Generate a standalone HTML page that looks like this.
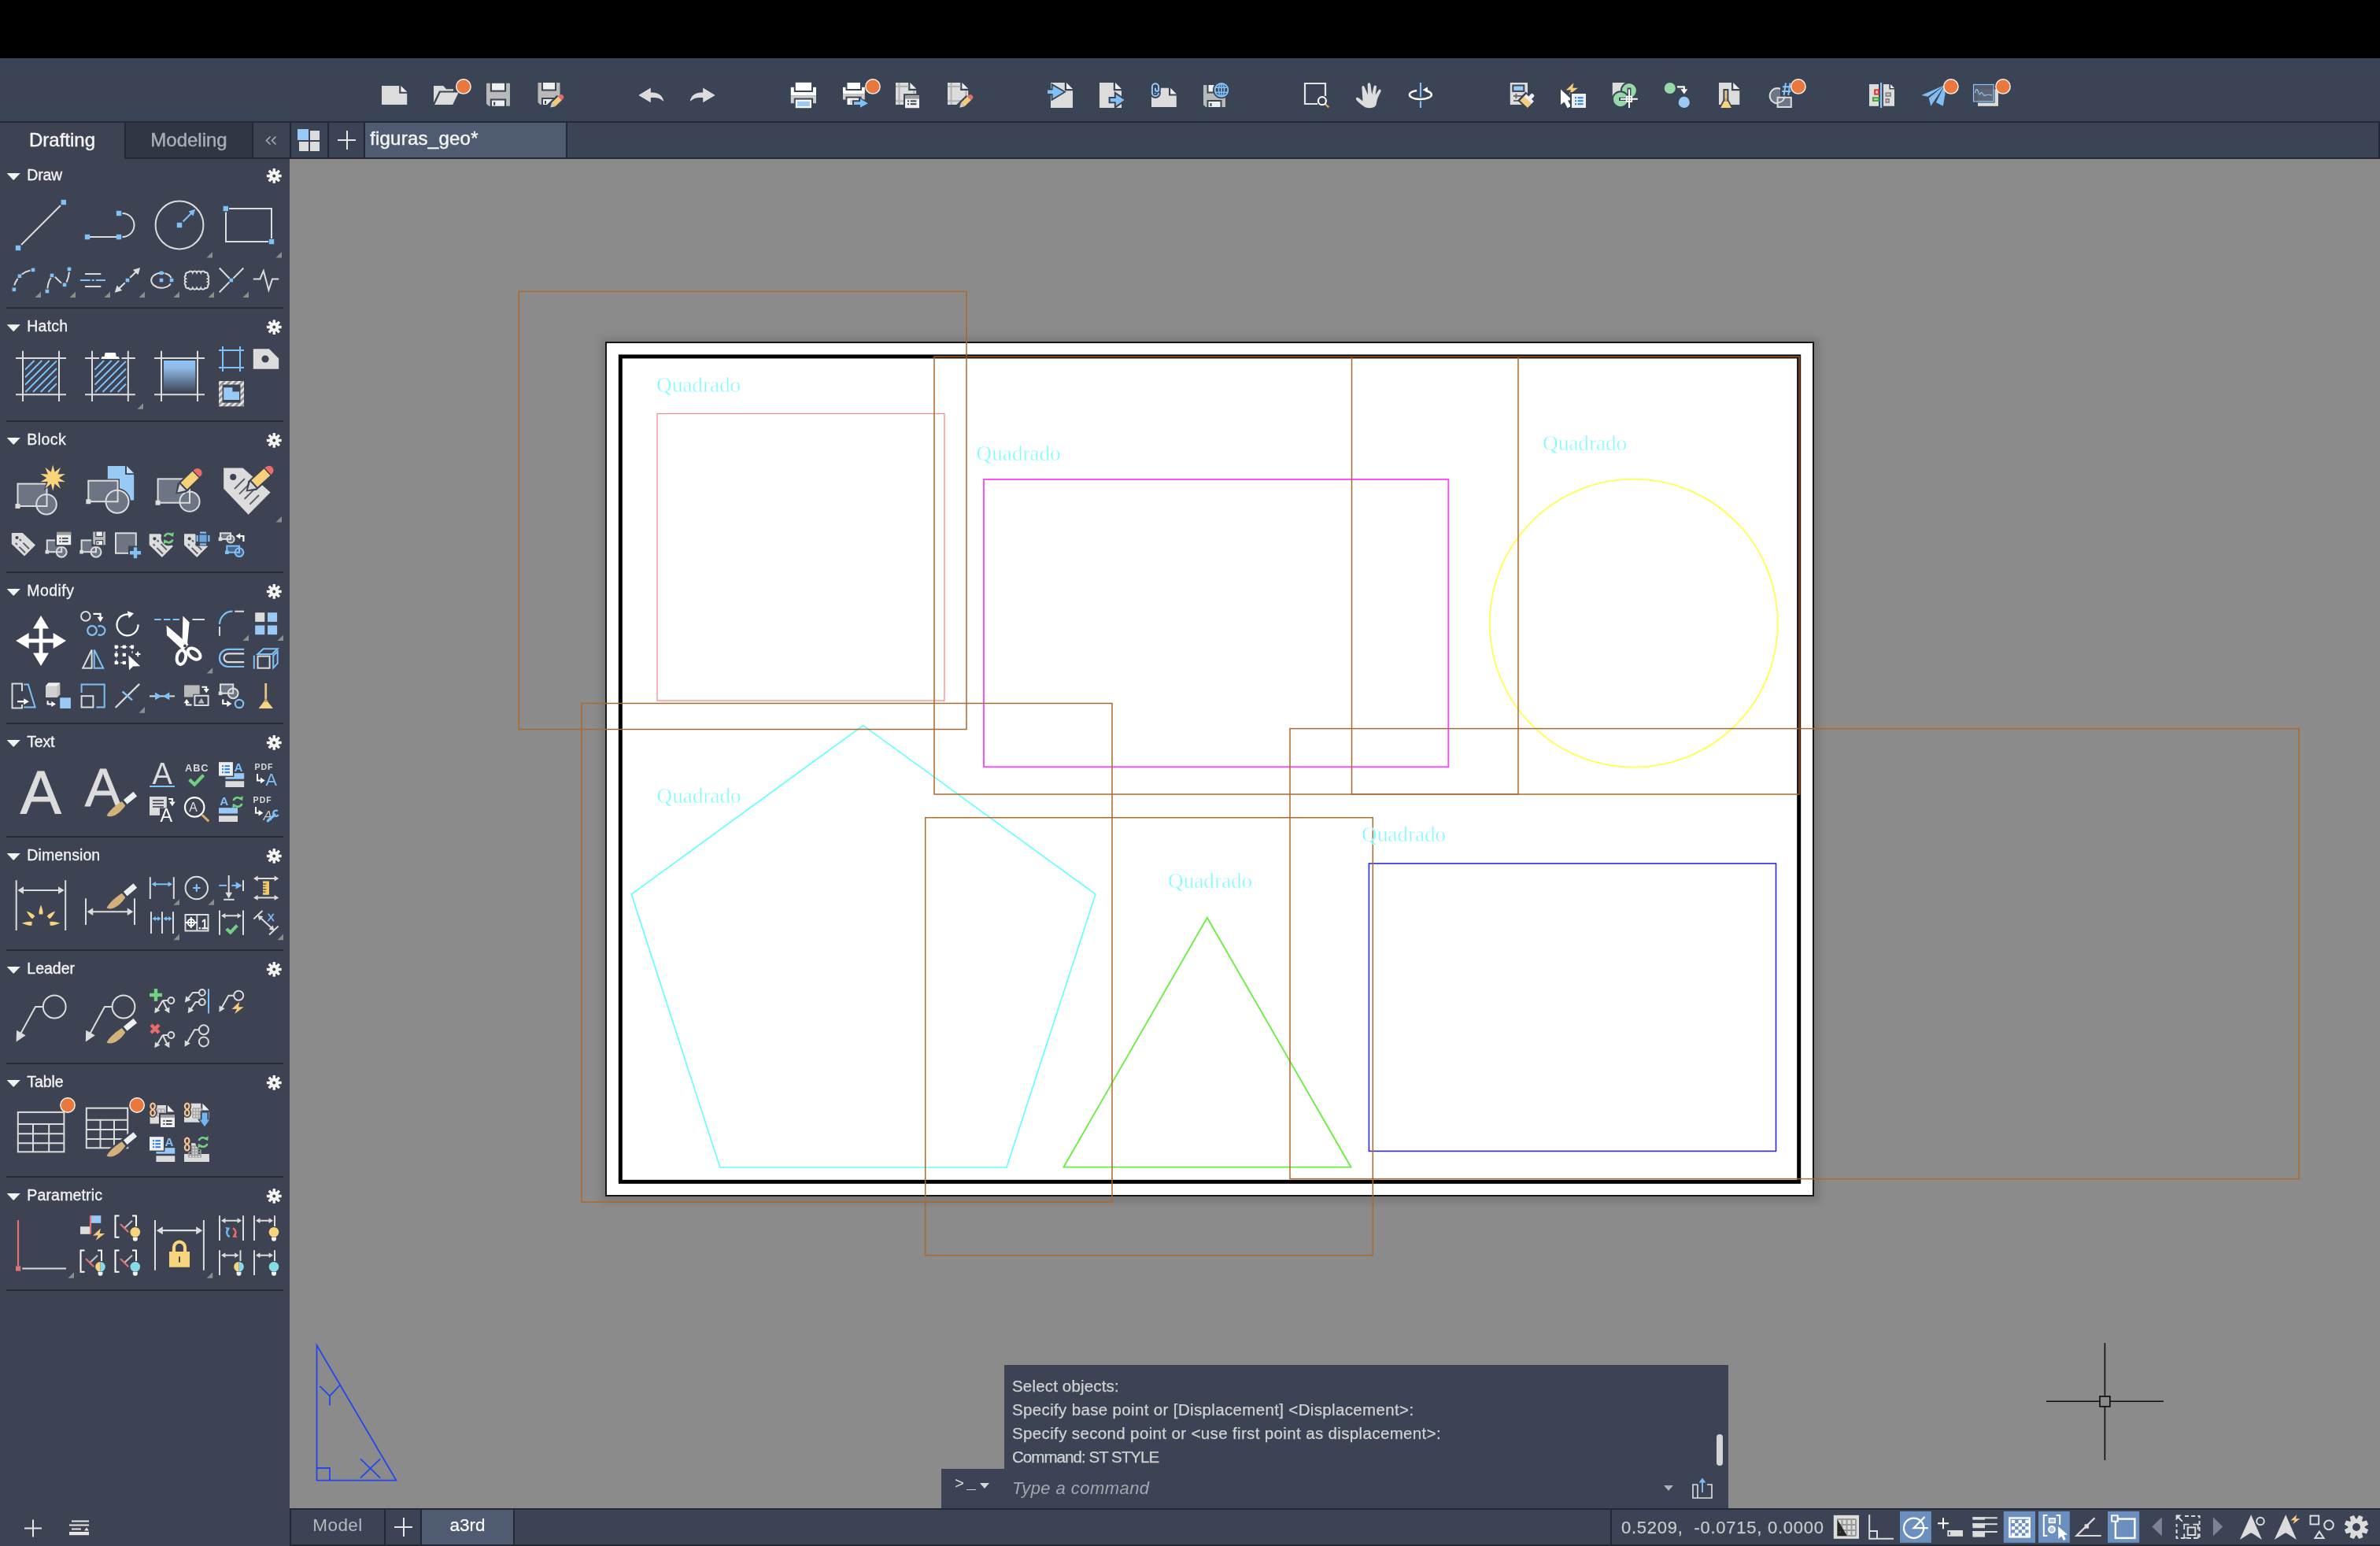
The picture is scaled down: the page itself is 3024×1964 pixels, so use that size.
<!DOCTYPE html>
<html><head><meta charset="utf-8"><title>AutoCAD</title>
<style>
*{box-sizing:border-box;margin:0;padding:0}
html,body{width:3024px;height:1964px;overflow:hidden;background:#8b8b8b;font-family:"Liberation Sans",sans-serif;}
.abs{position:absolute}
svg,.ptab,.cmdt,.txt{will-change:transform}
#top{position:absolute;left:0;top:0;width:3024px;height:74px;background:#000}
#toolbar{position:absolute;left:0;top:74px;width:3024px;height:80px;background:#3b4455}
#tbline{position:absolute;left:0;top:154px;width:3024px;height:2px;background:#232a36}
#tabrow{position:absolute;left:368px;top:156px;width:2656px;height:44px;background:#3b4455}
#tabline{position:absolute;left:368px;top:200px;width:2656px;height:2px;background:#232a36}
#panel{position:absolute;left:0;top:156px;width:368px;height:1808px;background:#3d4352}
#canvas{position:absolute;left:368px;top:202px;width:2656px;height:1714px;background:#8b8b8b;overflow:hidden}
#status{position:absolute;left:368px;top:1916px;width:2656px;height:48px;background:#3b4354;border-top:2px solid #232a36;border-bottom:2px solid #232a36}
.vsep{position:absolute;width:2px;background:#232a36}
.ptab{position:absolute;top:156px;height:44px;font-size:24px;line-height:44px;text-align:center}
.hdr{position:absolute;left:34px;font-size:19px;color:#f2f2f2;line-height:24px;height:24px;text-shadow:0 0 0.6px #f2f2f2}
.tri{position:absolute;left:9px;width:0;height:0;border-left:8px solid transparent;border-right:8px solid transparent;border-top:9px solid #f2f2f2}
.sep{position:absolute;left:9px;width:351px;height:2px;background:#252b37}
.ic{position:absolute;overflow:visible}
.cmdt{position:absolute;left:1286px;font-size:20.5px;color:#d2d2d2;-webkit-text-stroke:0.25px #d2d2d2;line-height:30px;height:30px;white-space:pre}
</style></head><body>
<div id="top"></div>
<div id="toolbar"></div>
<div id="tbline"></div>
<div id="panel"></div>
<div id="tabrow"></div>
<div id="tabline"></div>
<!-- panel tabs -->
<div class="ptab" style="left:0;width:158px;background:#3d4352;color:#f4f4f4;height:46px;-webkit-text-stroke:0.45px #f4f4f4">Drafting</div>
<div class="ptab" style="left:160px;width:160px;background:#303644;color:#a9adb6;-webkit-text-stroke:0.45px #a9adb6">Modeling</div>
<div class="ptab" style="left:322px;width:46px;background:#3d4352"></div>
<div class="vsep" style="left:158px;top:156px;height:46px"></div>
<div class="vsep" style="left:320px;top:156px;height:46px"></div>
<div class="abs" style="left:158px;top:200px;width:210px;height:2px;background:#232a36"></div>
<div class="vsep" style="left:368px;top:156px;height:44px"></div>
<div class="vsep" style="left:416px;top:156px;height:44px"></div>
<div class="vsep" style="left:462px;top:156px;height:44px"></div>
<div class="abs" style="left:464px;top:156px;width:255px;height:44px;background:#4f5b71"></div>
<div class="vsep" style="left:719px;top:156px;height:44px"></div>
<div class="abs txt" style="left:470px;top:156px;height:44px;line-height:40px;font-size:24px;color:#f4f4f4;-webkit-text-stroke:0.45px #f4f4f4;letter-spacing:0.25px">figuras_geo*</div>
<div class="vsep" style="left:3022px;top:156px;height:44px"></div>
<!-- grid icon -->
<div class="abs" style="left:378px;top:164px;width:14px;height:14px;background:#99c9f5"></div>
<div class="abs" style="left:394px;top:166px;width:12px;height:12px;background:#dcdcdc"></div>
<div class="abs" style="left:380px;top:180px;width:12px;height:12px;background:#dcdcdc"></div>
<div class="abs" style="left:394px;top:180px;width:12px;height:12px;background:#dcdcdc"></div>
<!-- plus -->
<div class="abs" style="left:429px;top:177px;width:23px;height:2px;background:#e6e6e6"></div>
<div class="abs" style="left:439.5px;top:166px;width:2px;height:24px;background:#e6e6e6"></div>
<!-- << -->
<svg class="ic" style="left:324px;top:156px" width="44" height="44" viewBox="0 0 44 44"><path d="M19.5 17.5 L14.5 22.5 L19.5 27.5 M26.5 17.5 L21.5 22.5 L26.5 27.5" fill="none" stroke="#a9adb6" stroke-width="1.6"/></svg>
<div id="canvas">
<svg class="abs" style="left:0;top:0" width="2656" height="1714" viewBox="368 202 2656 1714">
<defs>
<filter id="psh" x="-5%" y="-5%" width="110%" height="110%"><feGaussianBlur stdDeviation="4.5"/></filter>
</defs>
<!-- paper shadow -->
<rect x="764" y="430" width="1548" height="1097" fill="#444" opacity="0.24" filter="url(#psh)"/>
<rect x="770" y="435" width="1534" height="1084" fill="#ffffff" stroke="#161616" stroke-width="2"/>
<!-- thick black border -->
<rect x="788.3" y="452.9" width="1497.4" height="1048.4" fill="none" stroke="#000" stroke-width="5"/>
<!-- shapes -->
<rect x="835" y="525.5" width="365" height="364.5" fill="none" stroke="#f28c8c" stroke-width="1.25"/>
<rect x="1250" y="609" width="590.3" height="365.3" fill="none" stroke="#ff40ff" stroke-width="1.8"/>
<circle cx="2075.8" cy="791.7" r="183" fill="none" stroke="#ffff50" stroke-width="1.8"/>
<polygon points="1096.7,921.6 1392,1136 1279,1483 914.8,1483 802.3,1136" fill="none" stroke="#66ffff" stroke-width="1.7"/>
<polygon points="1533.8,1165.8 1716.6,1482.7 1351.4,1482.7" fill="none" stroke="#66f03c" stroke-width="1.8"/>
<rect x="1739.4" y="1097" width="517.1" height="365.4" fill="none" stroke="#2a2ae6" stroke-width="1.6"/>
<!-- viewports (brown) -->
<g fill="none" stroke="#a96a2e" stroke-width="1.5">
<rect x="659.3" y="370.3" width="568.7" height="556.2"/>
<rect x="1187" y="453.1" width="1099.2" height="555.9"/>
<rect x="1717.5" y="453.1" width="211.5" height="555.9"/>
<rect x="739" y="893.5" width="674" height="633.5"/>
<rect x="1175.7" y="1038.7" width="568.6" height="556"/>
<rect x="1639" y="925.6" width="1282" height="572"/>
</g>
<path d="M1187 453.1 H2286.2 V1009" fill="none" stroke="#7c4416" stroke-width="2.4"/>
<!-- labels -->
<g font-family="Liberation Serif, serif" font-size="27.2" fill="#6ffcff" opacity="0.9" stroke="#ffffff" stroke-width="0.55">
<text x="834" y="498.3">Quadrado</text>
<text x="1240.5" y="584.9">Quadrado</text>
<text x="1960" y="572.4">Quadrado</text>
<text x="834.5" y="1019.8">Quadrado</text>
<text x="1484" y="1128">Quadrado</text>
<text x="1730" y="1068.8">Quadrado</text>
</g>
<!-- UCS icon -->
<g fill="none" stroke="#2447e8" stroke-width="1.8">
<polygon points="402.5,1709 503.4,1880.6 402.5,1880.6"/>
<path d="M402.5 1865 H419 V1880.6"/>
<path d="M406.3 1760.8 L419 1773.4 L431.5 1760 M419 1773.4 V1785.5"/>
<path d="M458 1853.3 L483.2 1877.6 M483.2 1853.3 L458 1877.6"/>
</g>
<!-- crosshair -->
<g fill="none" stroke="#101010" stroke-width="1.6">
<path d="M2600 1780.3 H2668 M2681 1780.3 H2749 M2674.4 1706 V1774 M2674.4 1787 V1855"/>
<rect x="2668" y="1773.9" width="12.9" height="12.9" stroke-width="1.7"/>
</g>
</svg>
<!-- command window -->
<div class="abs" style="left:908px;top:1532px;width:920px;height:134px;background:#3b4354"></div>
<div class="abs" style="left:828px;top:1664px;width:1000px;height:50px;background:#3b4354"></div>
<div class="abs" style="left:1813px;top:1620px;width:8px;height:40px;border-radius:4px;background:#d4d4d4"></div>
</div><!-- /canvas -->
<div class="cmdt" style="top:1746px;letter-spacing:0.17px">Select objects:</div>
<div class="cmdt" style="top:1776px;letter-spacing:0.35px">Specify base point or [Displacement] &lt;Displacement&gt;:</div>
<div class="cmdt" style="top:1806px;letter-spacing:0.36px">Specify second point or &lt;use first point as displacement&gt;:</div>
<div class="cmdt" style="top:1836px;letter-spacing:-0.95px">Command: ST STYLE</div>
<div class="abs txt" style="left:1286px;top:1876px;font-size:22px;line-height:30px;font-style:italic;color:#a3a8b1;letter-spacing:0.44px">Type a command</div>
<div class="abs txt" style="left:1213px;top:1872px;font-size:20px;line-height:28px;color:#d8d8d8;font-family:'Liberation Mono',monospace;letter-spacing:3px">&gt;_</div>
<div class="abs" style="left:1245px;top:1884px;width:0;height:0;border-left:6px solid transparent;border-right:6px solid transparent;border-top:7px solid #d8d8d8"></div>
<div class="abs" style="left:2114px;top:1887px;width:0;height:0;border-left:6px solid transparent;border-right:6px solid transparent;border-top:7px solid #aeb2ba"></div>
<svg class="ic" style="left:2148px;top:1874px" width="30" height="36" viewBox="0 0 30 36"><path d="M9 12 H3 V29 H27 V12 H21 M9 12 V29" fill="none" stroke="#e0e0e0" stroke-width="1.6"/><path d="M15 22 V6" stroke="#7fb8ee" stroke-width="2" fill="none"/><path d="M10.5 9.5 L15 3.5 L19.5 9.5 Z" fill="#7fb8ee"/></svg>
<div id="status"></div>
<!-- layout tabs -->
<div class="vsep" style="left:368px;top:1918px;height:44px"></div>
<div class="abs txt" style="left:370px;top:1918px;width:118px;height:44px;line-height:40px;text-align:center;font-size:22.5px;color:#b4b8c0;background:#3b4354;letter-spacing:0.4px">Model</div>
<div class="vsep" style="left:488px;top:1918px;height:44px"></div>
<div class="abs" style="left:501px;top:1939px;width:23px;height:2px;background:#e6e6e6"></div>
<div class="abs" style="left:511.5px;top:1928px;width:2px;height:24px;background:#e6e6e6"></div>
<div class="vsep" style="left:534px;top:1918px;height:44px"></div>
<div class="abs txt" style="left:536px;top:1918px;width:116px;height:44px;line-height:40px;text-align:center;font-size:22.5px;color:#f6f6f6;background:#4f5b71;text-shadow:0 0 0.8px #f6f6f6">a3rd</div>
<div class="vsep" style="left:652px;top:1918px;height:44px"></div>
<div class="vsep" style="left:2046px;top:1918px;height:44px"></div>
<div class="abs txt" style="left:2060px;top:1918px;height:44px;line-height:46px;font-size:22px;color:#c8c8c8;-webkit-text-stroke:0.25px #c8c8c8;white-space:pre;letter-spacing:0.75px">0.5209,  -0.0715, 0.0000</div>
<svg class="abs" style="left:2300px;top:1916px" width="724" height="48" viewBox="2300 1916 724 48">
<rect x="2329.8" y="1924.9" width="32.2" height="29.9" fill="#dcdcdc" />
<path d="M2340.5 1929.9 V1951 M2346.5 1929.9 V1951 M2352.5 1929.9 V1951 M2358 1929.9 V1951 M2334.4 1929.9 H2358 M2334.4 1936.9 H2358 M2334.4 1943.9 H2358 M2334.4 1951 H2358 " stroke="#9a9a9a" stroke-width="2" fill="none" />
<path d="M2334.4 1929.9 L2346.8 1951 H2334.4 Z" fill="#262626" />
<rect x="2337.6" y="1945.6" width="1.2" height="1.2" fill="#888" />
<path d="M2375.2 1924.3 V1954.8 H2406 M2375.2 1945 H2385 V1954.8" stroke="#dcdcdc" stroke-width="2" fill="none" />
<rect x="2414" y="1920" width="39.9" height="39.8" fill="#6b90c0" />
<circle cx="2431.6" cy="1941.2" r="12.6" fill="none" stroke="#ffffff" stroke-width="2.2"/>
<path d="M2449.8 1941.2 H2431.6 L2445.5 1926.9" stroke="#ffffff" stroke-width="2.2" fill="none" stroke-linejoin="miter"/>
<path d="M2462 1935.2 H2476 M2469 1928.2 V1942.2" stroke="#ffffff" stroke-width="2" fill="none" />
<rect x="2474.3" y="1944" width="19.7" height="7.8" fill="#dcdcdc" />
<rect x="2476.4" y="1946" width="1.6" height="4" fill="#3d4352" />
<rect x="2506.4" y="1927.3" width="31.4" height="2" fill="#dcdcdc" />
<rect x="2506.4" y="1927.3" width="15.6" height="3.4" fill="#dcdcdc" />
<rect x="2506.4" y="1935.2" width="31.4" height="2" fill="#dcdcdc" />
<rect x="2506.4" y="1935.2" width="15.6" height="6" fill="#dcdcdc" />
<rect x="2506.4" y="1945" width="31.4" height="2" fill="#dcdcdc" />
<rect x="2506.4" y="1945" width="15.6" height="7.6" fill="#dcdcdc" />
<rect x="2545.8" y="1920" width="40.2" height="39.8" fill="#6b90c0" />
<rect x="2553.4" y="1928.5" width="25.3" height="23.9" fill="none" stroke="#ffffff" stroke-width="2.4" />
<rect x="2555.8" y="1930.9" width="4.38" height="4.14" fill="#ffffff" />
<rect x="2555.8" y="1939.18" width="4.38" height="4.14" fill="#ffffff" />
<rect x="2555.8" y="1947.46" width="4.38" height="4.14" fill="#ffffff" />
<rect x="2560.18" y="1935.04" width="4.38" height="4.14" fill="#ffffff" />
<rect x="2560.18" y="1943.32" width="4.38" height="4.14" fill="#ffffff" />
<rect x="2564.56" y="1930.9" width="4.38" height="4.14" fill="#ffffff" />
<rect x="2564.56" y="1939.18" width="4.38" height="4.14" fill="#ffffff" />
<rect x="2564.56" y="1947.46" width="4.38" height="4.14" fill="#ffffff" />
<rect x="2568.94" y="1935.04" width="4.38" height="4.14" fill="#ffffff" />
<rect x="2568.94" y="1943.32" width="4.38" height="4.14" fill="#ffffff" />
<rect x="2573.32" y="1930.9" width="4.38" height="4.14" fill="#ffffff" />
<rect x="2573.32" y="1939.18" width="4.38" height="4.14" fill="#ffffff" />
<rect x="2573.32" y="1947.46" width="4.38" height="4.14" fill="#ffffff" />
<rect x="2590" y="1920" width="39.8" height="39.8" fill="#6b90c0" />
<path d="M2601.4 1924.9 H2596.8 V1951 H2601.4 M2612.6 1924.9 H2617.2 V1937" stroke="#ffffff" stroke-width="2" fill="none" />
<rect x="2603.6" y="1929" width="7.6" height="5.4" fill="#a8bcdc" stroke="#ffffff" stroke-width="1.6" />
<circle cx="2607" cy="1943" r="4" fill="#b8c8e2" stroke="#ffffff" stroke-width="1.8"/>
<path d="M2615 1939 L2615.4 1955 L2619.4 1951.4 L2622 1957 L2624.8 1955.6 L2622.2 1950.2 L2627 1949.6 Z" fill="#ffffff" />
<path d="M2669.7 1951 H2638.4 L2661.5 1928.4" stroke="#dcdcdc" stroke-width="2.2" fill="none" stroke-linejoin="miter"/>
<rect x="2648.6" y="1936.3" width="5.4" height="5.4" fill="#dcdcdc"/>
<rect x="2678" y="1920" width="40.2" height="39.8" fill="#6b90c0" />
<rect x="2687.9" y="1929.6" width="24.5" height="24.3" fill="none" stroke="#ffffff" stroke-width="2.4" />
<rect x="2683.2" y="1925.3" width="7.5" height="7.4" fill="#6b90c0" stroke="#ffffff" stroke-width="2" />
<path d="M2734.3 1939.4 L2746.9 1927.3 V1951.5 Z" fill="#7c8494" />
<path d="M2824.3 1939.4 L2811.9 1927.3 V1951.5 Z" fill="#7c8494" />
<path d="M2776 1925.9 H2794.6 V1954.1 H2765.6 V1936" stroke="#dcdcdc" stroke-width="2" fill="none" stroke-dasharray="5 3.2"/>
<rect x="2779.7" y="1940.4" width="9.6" height="9.6" fill="none" stroke="#dcdcdc" stroke-width="2" />
<path d="M2775.2 1943 V1936.6 H2781.6 M2786.4 1936.6 H2792.8 V1943 M2775.2 1948.4 V1953.6 H2781 M2787 1953.6 H2792.8 V1948.4" stroke="#dcdcdc" stroke-width="1.8" fill="none" />
<path d="M2772.9 1932.9 L2767.4 1927.3" stroke="#dcdcdc" stroke-width="2" fill="none" stroke-linecap="butt"/>
<path d="M2764.6 1924.6 H2771.6 L2764.6 1931.6 Z" fill="#dcdcdc" />
<path d="M2860.2 1924.3 L2874 1956 L2862.6 1948.4 Q2860.2 1946.4 2857.8 1948.4 L2845.8 1956 Z" fill="#dcdcdc" />
<circle cx="2872" cy="1932.5" r="4.8" fill="none" stroke="#dcdcdc" stroke-width="2"/>
<path d="M2904.2 1924.3 L2918 1956 L2906.6 1948.4 Q2904.2 1946.4 2901.8 1948.4 L2889.8 1956 Z" fill="#dcdcdc" />
<path d="M2918.12 1924.2 L2910.4 1931.45 L2915.55 1931.14 L2913.36 1936.13 L2922.33 1929.27 L2917.11 1929.27 Z" fill="#f5cc78"/>
<rect x="2935.5" y="1925.6" width="10.7" height="10.8" fill="none" stroke="#dcdcdc" stroke-width="2" />
<circle cx="2959" cy="1937.4" r="5.8" fill="none" stroke="#dcdcdc" stroke-width="2"/>
<path d="M2946.9 1945.6 L2952.6 1954.1 H2941.4 Z" stroke="#dcdcdc" stroke-width="2" fill="none" />
<g transform="translate(2994 1940)"><circle r="10.6" fill="#dcdcdc"/><path d="M-3.6 -9.1 L-2.8 -15.2 H2.8 L3.6 -9.1 Z" fill="#dcdcdc" transform="rotate(22.5)"/><path d="M-3.6 -9.1 L-2.8 -15.2 H2.8 L3.6 -9.1 Z" fill="#dcdcdc" transform="rotate(67.5)"/><path d="M-3.6 -9.1 L-2.8 -15.2 H2.8 L3.6 -9.1 Z" fill="#dcdcdc" transform="rotate(112.5)"/><path d="M-3.6 -9.1 L-2.8 -15.2 H2.8 L3.6 -9.1 Z" fill="#dcdcdc" transform="rotate(157.5)"/><path d="M-3.6 -9.1 L-2.8 -15.2 H2.8 L3.6 -9.1 Z" fill="#dcdcdc" transform="rotate(202.5)"/><path d="M-3.6 -9.1 L-2.8 -15.2 H2.8 L3.6 -9.1 Z" fill="#dcdcdc" transform="rotate(247.5)"/><path d="M-3.6 -9.1 L-2.8 -15.2 H2.8 L3.6 -9.1 Z" fill="#dcdcdc" transform="rotate(292.5)"/><path d="M-3.6 -9.1 L-2.8 -15.2 H2.8 L3.6 -9.1 Z" fill="#dcdcdc" transform="rotate(337.5)"/><circle r="5" fill="#3b4354"/></g>
</svg>
<svg class="abs" style="left:0;top:74px" width="3024" height="80" viewBox="0 74 3024 80">
<defs>
<g id="odot"><circle r="9.9" fill="#fff5ee"/><circle r="8.5" fill="#e8783e"/></g>
<g id="pencil"><!-- tip at 0,0 pointing down-left; drawn along +x then rotated -->
<path d="M0 0 L5.5 -3.3 L5.5 3.3 Z" fill="#cfcfcf"/><rect x="5.5" y="-3.3" width="11.5" height="6.6" fill="#f3cc7c"/><path d="M17 -3.3 H19 A3.3 3.3 0 0 1 19 3.3 H17 Z" fill="#ea6b6b"/></g>
<g id="floppy"><!-- 28x28 box at 0,0 -->
<path d="M0 0 H28 V28 H3 L0 25 Z" fill="#b9b9b9"/><rect x="4.5" y="-1" width="19" height="11.5" fill="#3b4455"/><rect x="6.5" y="0" width="15" height="8.5" fill="#efefef"/><rect x="4.5" y="19" width="19" height="10" fill="#3b4455"/><rect x="6.5" y="21" width="15" height="7" fill="#efefef"/><rect x="8.5" y="23" width="2" height="4" fill="#3b4455"/></g>
</defs>
<!-- New -->
<path d="M485 109 H507.2 V118.8 H517.2 V133 H485 Z" fill="#dcdcdc"/><path d="M509.4 109 L517.2 116.8 H509.4 Z" fill="#efefef"/>
<!-- Open -->
<path d="M551 109 H563.2 L567 113.3 H576 V115.4 H558 L551 130 Z" fill="#dcdcdc"/><path d="M559.6 117.5 H582.6 L575.2 133 H552.2 Z" fill="#dcdcdc"/>
<use href="#odot" x="588.9" y="109.9"/>
<!-- Save -->
<use href="#floppy" transform="translate(618 105.8) scale(1.07 1.035)"/>
<!-- Save as -->
<use href="#floppy" x="683.5" y="105"/>
<g transform="translate(699.3 136.6) rotate(-44)"><path d="M-2 -5.6 H17 V5.6 H-2Z" fill="#3b4455"/><use href="#pencil"/></g>
<!-- Undo -->
<path d="M811.3 120.9 L826.8 111.6 V117.6 C836 117 842 121 843.3 129 C839 124.5 834 123.6 826.8 124 V130.3 Z" fill="#dcdcdc"/>
<!-- Redo -->
<path d="M908.7 120.9 L893.2 111.6 V117.6 C884 117 878 121 876.7 129 C881 124.5 886 123.6 893.2 124 V130.3 Z" fill="#dcdcdc"/>
<!-- Print -->
<rect x="1004.8" y="110.8" width="32.2" height="10.4" fill="#ffffff"/><rect x="1004.8" y="121.2" width="32.2" height="10" fill="#cdcdcd"/>
<rect x="1008.8" y="103" width="24.2" height="14" fill="#3b4455"/><rect x="1010.8" y="104.8" width="20.2" height="10.2" fill="#ffffff"/>
<rect x="1008.8" y="124.6" width="24.2" height="8" fill="#3b4455"/><rect x="1010.8" y="126.6" width="20.2" height="10.6" fill="#ffffff"/><rect x="1013" y="128.8" width="15.8" height="6.2" fill="#99c9f5"/>
<!-- Batch print -->
<rect x="1071" y="110.8" width="27.8" height="8.4" fill="#ffffff"/><rect x="1071" y="119.2" width="27.8" height="7.4" fill="#cdcdcd"/>
<rect x="1074.5" y="103.4" width="20.5" height="11.6" fill="#3b4455"/><rect x="1076.5" y="105" width="16.5" height="8" fill="#ffffff"/>
<rect x="1074.5" y="122.6" width="20" height="6" fill="#3b4455"/><rect x="1076.5" y="124.6" width="15" height="8.4" fill="#ffffff"/><rect x="1080" y="126.6" width="13" height="5" fill="#cdcdcd"/>
<path d="M1083 127.3 H1091 V123 L1105.5 131.2 L1091 139.4 V135 H1083 Z" fill="#3b4455"/><path d="M1085 129.3 H1093 V125.6 L1102.8 131.2 L1093 136.8 V133 H1085 Z" fill="#7fc0f7"/>
<use href="#odot" x="1109" y="109.9"/>
<!-- Page setup -->
<path d="M1138 105 H1154.2 V115 H1164.2 V133 H1138 Z" fill="#dcdcdc"/><path d="M1156.4 105 L1164.2 112.8 H1156.4 Z" fill="#efefef"/>
<g fill="#b0b0b0"><rect x="1141.5" y="105" width="2" height="28"/><rect x="1138" y="108.8" width="16.5" height="2"/><rect x="1138" y="127.3" width="14" height="2"/><rect x="1160.4" y="115" width="2" height="8"/></g>
<rect x="1148" y="119.2" width="22" height="20" fill="#3b4455"/><rect x="1150" y="121.2" width="18" height="16" fill="#f0f0f0"/><rect x="1150" y="121.2" width="18" height="4.4" fill="#9c9c9c"/>
<g fill="#3b4455"><rect x="1153" y="127.4" width="2" height="2"/><rect x="1156.8" y="127.4" width="7.6" height="2"/><rect x="1153" y="131.2" width="2" height="2"/><rect x="1156.8" y="131.2" width="7.6" height="2"/></g>
<!-- Page edit -->
<path d="M1204 105 H1220.2 V115 H1230.2 V133 H1204 Z" fill="#dcdcdc"/><path d="M1222.4 105 L1230.2 112.8 H1222.4 Z" fill="#efefef"/>
<g fill="#b0b0b0"><rect x="1207.5" y="105" width="2" height="28"/><rect x="1204" y="108.8" width="16.5" height="2"/><rect x="1204" y="127.3" width="18" height="2"/><rect x="1226.4" y="115" width="2" height="12"/></g>
<g transform="translate(1219.3 136.8) rotate(-44)"><path d="M-2 -5.6 H17 V5.6 H-2Z" fill="#3b4455"/><use href="#pencil"/></g>
<!-- Import -->
<path d="M1335 105 H1352.8 V115.2 H1363 V137 H1335 Z" fill="#dcdcdc"/><path d="M1355 105 L1363 113 H1355 Z" fill="#efefef"/>
<path d="M1329 112.6 H1335.6 V105.6 L1354.8 116.8 L1335.6 128.4 V121 H1329 Z" fill="#3b4455"/><path d="M1331 114.6 H1337.6 V109 L1351.5 116.8 L1337.6 125 V119 H1331 Z" fill="#7fc0f7"/>
<!-- Export -->
<path d="M1397 105 H1414.8 V115.2 H1425 V137 H1397 Z" fill="#dcdcdc"/><path d="M1417 105 L1425 113 H1417 Z" fill="#efefef"/>
<path d="M1408.6 123 H1415.8 V116 L1432 127.1 L1415.8 138.4 V131.3 H1408.6 Z" fill="#3b4455"/><path d="M1410.7 125 H1417.8 V120 L1428.7 127.1 L1417.8 134.4 V129.3 H1410.7 Z" fill="#7fc0f7"/>
<!-- Attach -->
<path d="M1463 111.8 H1485 V121.6 H1494.8 V136 H1463 Z" fill="#dcdcdc"/><path d="M1487.2 111.8 L1494.8 119.4 H1487.2 Z" fill="#efefef"/>
<path d="M1468 111.8 V114 A2.05 2.05 0 0 0 1472.1 114 V110.4 A4.1 4.1 0 0 0 1463.9 110.4 V118 A4.1 4.1 0 0 0 1472.1 118" fill="none" stroke="#3b4455" stroke-width="5.6" stroke-linecap="round"/>
<path d="M1468 111.8 V114 A2.05 2.05 0 0 0 1472.1 114 V110.4 A4.1 4.1 0 0 0 1463.9 110.4 V118 A4.1 4.1 0 0 0 1472.1 118" fill="none" stroke="#8ccbff" stroke-width="2" stroke-linecap="butt"/>
<!-- Save web -->
<use href="#floppy" x="1529" y="108"/>
<circle cx="1552" cy="114.3" r="11" fill="#3b4455"/><circle cx="1552" cy="114.3" r="8.3" fill="none" stroke="#7fc0f7" stroke-width="2"/>
<g fill="none" stroke="#7fc0f7" stroke-width="1.6"><ellipse cx="1552" cy="114.3" rx="3.6" ry="8.3"/><path d="M1544.4 111.3 H1559.6 M1544.4 117.3 H1559.6 M1552 106 V122.6"/></g>
<!-- Zoom window -->
<path d="M1674 132 H1658 V106 H1684 V122" fill="none" stroke="#e4e4e4" stroke-width="2.2"/>
<path d="M1683.6 132 L1688.4 136.4" stroke="#d9ad6c" stroke-width="2.2" fill="none"/><circle cx="1679.9" cy="128.2" r="5" fill="#3b4455" stroke="#ffffff" stroke-width="2.2"/>
<!-- Pan hand -->
<path d="M1731.5 128.5 C1729 126.5 1726.5 124.5 1724.2 123.6 C1722.4 124.6 1722.6 126.4 1724 127.8 C1727 130.6 1730.5 134 1734.5 136.2 C1739 138 1745.5 137.5 1748 134.2 C1749.4 131 1749.2 128 1750.2 125.2 L1754.6 116 C1755.2 114 1753 112.6 1751.6 114.4 L1747.6 120.6 L1749 110.6 C1749.2 108.2 1746.2 107.6 1745.5 110 L1743.2 120 L1741.4 107.4 C1741 104.6 1737.8 104.8 1737.6 107.4 L1738 120.2 L1733.6 110.2 C1732.6 108 1729.8 109 1730.4 111.4 Z" fill="#dcdcdc"/>
<!-- Orbit -->
<path d="M1805 105 V123.6 M1805 128.6 V137" stroke="#7fc0f7" stroke-width="2.2" fill="none"/>
<path d="M1811.5 115.3 A14 5.7 0 1 1 1800.2 114.95" fill="none" stroke="#ffffff" stroke-width="2.5"/>
<path d="M1807.6 114.2 L1813.6 110.4 L1814.6 117.6 Z" fill="#ffffff"/>
<!-- Properties/match -->
<rect x="1918.8" y="105" width="22.2" height="28" fill="#dcdcdc"/><rect x="1921.3" y="107.5" width="16" height="9.4" fill="#3b4455"/><rect x="1923.3" y="109.5" width="12" height="5.4" fill="#99c9f5"/>
<g fill="#6e6e6e"><rect x="1923" y="121" width="12" height="2"/><rect x="1925.4" y="119" width="2" height="6"/><rect x="1923" y="127" width="9.5" height="2"/></g>
<g transform="translate(1941.5 129.5) rotate(44) scale(1.22)"><rect x="-9" y="-6" width="14" height="12.5" fill="#3b4455"/><rect x="-7" y="-1.2" width="11" height="6" fill="#f3cc7c"/><rect x="-7" y="-4.6" width="11" height="3.6" fill="#f0f0f0"/><rect x="-3.6" y="-9.6" width="4.2" height="6" rx="1.6" fill="#f0f0f0"/></g>
<!-- Quick select -->
<path d="M1983 113.5 V133 L1987.6 129.4 L1991.6 137.2 L1996 135 L1992 127.6 L1997.6 127 Z" fill="#ffffff"/>
<path d="M1999.5 105.3 L1989.6 114.6 L1996.2 114.2 L1993.4 120.6 L2004.9 111.8 L1998.2 111.8 Z" fill="#f5cc78"/>
<rect x="1995" y="117" width="22" height="22" fill="#3b4455"/><rect x="1997" y="119" width="18" height="18" fill="#efefef"/>
<g fill="#2a7de1"><rect x="2001" y="123.2" width="2" height="2"/><rect x="2004.6" y="123.2" width="7" height="2"/><rect x="2001" y="127.2" width="2" height="2"/><rect x="2004.6" y="127.2" width="7" height="2"/><rect x="2001" y="131.2" width="2" height="2"/><rect x="2004.6" y="131.2" width="7" height="2"/></g>
<!-- Layer match -->
<rect x="2048.8" y="105" width="18.2" height="17.8" fill="#dcdcdc"/>
<circle cx="2069.9" cy="115.1" r="11" fill="#3b4455"/><circle cx="2069.9" cy="115.1" r="9" fill="#96d8a6"/>
<circle cx="2059" cy="126.2" r="11" fill="#3b4455"/><circle cx="2059" cy="126.2" r="9" fill="#96d8a6"/>
<path d="M2057 123.8 H2067.6 V111.5 H2072.4 V123.8 H2082.8 V128 H2072.4 V139 H2067.6 V128 H2057 Z" fill="#3b4455"/>
<path d="M2059 125.8 H2080.8 M2070 113.5 V137" stroke="#ffffff" stroke-width="2" fill="none"/><rect x="2066.8" y="122.6" width="6.4" height="6.4" fill="none" stroke="#ffffff" stroke-width="1.8"/>
<!-- Dots -->
<circle cx="2121.8" cy="112" r="7.1" fill="#96d8a6"/><circle cx="2139.8" cy="129.9" r="7.1" fill="#99c9f5"/>
<path d="M2131 110.3 H2139.8 V114" fill="none" stroke="#ffffff" stroke-width="2.2"/><path d="M2135.4 113.2 H2144.2 L2139.8 119.4 Z" fill="#ffffff"/>
<!-- Purge -->
<path d="M2184 105 H2200 V115.2 H2210.3 V133 H2184 Z" fill="#dcdcdc"/><path d="M2202.2 105 L2210.3 113 H2202.2 Z" fill="#efefef"/>
<path d="M2189.4 113 H2196.4 V127 L2202.6 139 H2183.4 L2189.4 127 Z" fill="#3b4455"/>
<rect x="2191.4" y="115" width="3" height="10" fill="#e8c488"/><rect x="2191.4" y="125" width="3" height="3.8" fill="#cfa566"/><path d="M2190.6 128.8 H2195.4 L2199.8 137 H2186.2 Z" fill="#f6d484"/>
<!-- Count -->
<circle cx="2258.3" cy="121.7" r="9.6" fill="#6d7586" stroke="#dcdcdc" stroke-width="2"/>
<rect x="2258.6" y="123.8" width="17.2" height="12.2" fill="#6d7586" stroke="#dcdcdc" stroke-width="2"/>
<path d="M2258.6 130.5 A9.6 9.6 0 0 0 2267.4 123.8" fill="none" stroke="#dcdcdc" stroke-width="2"/>
<rect x="2262" y="103" width="16" height="19.5" fill="#3b4455"/>
<path d="M2269 105.4 L2266.6 121 M2274.6 105.4 L2272.2 121 M2265 110.3 H2276.2 M2264.2 116 H2275.4" stroke="#8ec5f7" stroke-width="2" fill="none"/>
<use href="#odot" x="2284.9" y="109.9"/>
<!-- Compare -->
<rect x="2375" y="107" width="12" height="27.8" fill="#dcdcdc"/><path d="M2393 107 H2400.4 V113.6 H2407 V134.8 H2393 Z" fill="#dcdcdc"/><path d="M2402 107 L2407 112 H2402Z" fill="#f2f2f2"/>
<rect x="2389" y="105" width="2.2" height="32" fill="#8ec5f7"/>
<rect x="2382.2" y="114.3" width="4.8" height="5.4" fill="#dcdcdc" stroke="#e03030" stroke-width="2"/><rect x="2380" y="124.3" width="7" height="3.6" fill="#dcdcdc" stroke="#36a836" stroke-width="2"/>
<rect x="2396.4" y="118.3" width="5.6" height="3.6" fill="#dcdcdc" stroke="#8a8a8a" stroke-width="2"/><rect x="2396.4" y="126" width="3.6" height="4" fill="#dcdcdc" stroke="#8a8a8a" stroke-width="2"/>
<!-- Share plane -->
<g fill="#7fbdf2"><path d="M2441.3 121.1 L2471 108 L2449.4 122.8 Z"/><path d="M2450.8 124.4 L2471 108 L2453.3 134.8 Z"/><path d="M2459.9 129.9 L2471 108 L2471.5 119.5 L2468.8 134.8 Z"/></g>
<use href="#odot" x="2478.9" y="109.9"/>
<!-- Monitor -->
<rect x="2513" y="113.5" width="26" height="21.3" fill="#dcdcdc"/><rect x="2505.6" y="105.6" width="29" height="25" fill="#3b4455"/>
<rect x="2507.6" y="107.5" width="25.4" height="21.4" fill="#5e6576" stroke="#8ec5f7" stroke-width="1.3"/><rect x="2508.4" y="108.3" width="4" height="20" fill="#555c6c"/><rect x="2508.4" y="108.3" width="24" height="5" fill="#555c6c"/>
<path d="M2509.8 118 C2510.6 112 2512.6 112.6 2513.6 117 C2514.4 121 2515.8 120 2516.6 118.4 C2517.6 116.8 2518.6 118 2519.6 119.8 C2520.6 121.8 2522.4 121.4 2523.6 120.8 C2525.6 120 2528.4 120.2 2531 121.4" fill="none" stroke="#8ec5f7" stroke-width="1.2"/>
<use href="#odot" x="2545" y="109.9"/>
</svg>
<svg class="abs" style="left:0;top:156px" width="368" height="1808" viewBox="0 156 368 1808" font-family="Liberation Sans, sans-serif">
<path d="M8.6 220 H25.8 L17.2 229 Z" fill="#f2f2f2"/><text x="34.3" y="229" font-size="19.5" fill="#f2f2f2" stroke="#f2f2f2" stroke-width="0.35" letter-spacing="-0.2">Draw</text><g transform="translate(348.3 223.4)"><circle r="6" fill="#f4f4f4"/><rect x="-1.75" y="-9.4" width="3.5" height="4.9" rx="0.5" fill="#f4f4f4" transform="rotate(0)"/><rect x="-1.75" y="-9.4" width="3.5" height="4.9" rx="0.5" fill="#f4f4f4" transform="rotate(45)"/><rect x="-1.75" y="-9.4" width="3.5" height="4.9" rx="0.5" fill="#f4f4f4" transform="rotate(90)"/><rect x="-1.75" y="-9.4" width="3.5" height="4.9" rx="0.5" fill="#f4f4f4" transform="rotate(135)"/><rect x="-1.75" y="-9.4" width="3.5" height="4.9" rx="0.5" fill="#f4f4f4" transform="rotate(180)"/><rect x="-1.75" y="-9.4" width="3.5" height="4.9" rx="0.5" fill="#f4f4f4" transform="rotate(225)"/><rect x="-1.75" y="-9.4" width="3.5" height="4.9" rx="0.5" fill="#f4f4f4" transform="rotate(270)"/><rect x="-1.75" y="-9.4" width="3.5" height="4.9" rx="0.5" fill="#f4f4f4" transform="rotate(315)"/><circle r="2" fill="#3d4352"/></g>
<path d="M27 311 L77 261" stroke="#dcdcdc" stroke-width="2" fill="none" stroke-linecap="butt"/>
<rect x="77.6" y="253.8" width="6.4" height="6.4" fill="#7fc0f7"/>
<rect x="19.8" y="311.8" width="6.4" height="6.4" fill="#7fc0f7"/>
<path d="M114 301 L148 301" stroke="#dcdcdc" stroke-width="2" fill="none" stroke-linecap="butt"/>
<path d="M155.5 271 A15 15 0 0 1 155.5 301" stroke="#dcdcdc" stroke-width="2" fill="none" />
<rect x="107.8" y="297.8" width="6.4" height="6.4" fill="#7fc0f7"/>
<rect x="147.8" y="297.8" width="6.4" height="6.4" fill="#7fc0f7"/>
<rect x="147.8" y="267.8" width="6.4" height="6.4" fill="#7fc0f7"/>
<circle cx="228" cy="286" r="30.4" fill="none" stroke="#dcdcdc" stroke-width="2"/>
<rect x="224.8" y="282.8" width="6.4" height="6.4" fill="#7fc0f7"/>
<path d="M232.5 281.5 L243.5 270.5" stroke="#7fc0f7" stroke-width="2.2" fill="none" stroke-linecap="butt"/>
<path d="M248.2 265.8 L245.51 274.43 L239.57 268.49 Z" fill="#7fc0f7"/>
<path d="M291 265 H345 V303 M341 307 H287 V269.5" stroke="#dcdcdc" stroke-width="2" fill="none" />
<rect x="283.6" y="261.8" width="6.4" height="6.4" fill="#7fc0f7"/>
<rect x="341.8" y="303.8" width="6.4" height="6.4" fill="#7fc0f7"/>
<path d="M270 327.6 H262.4 L270 320 Z" fill="#8d8d8d"/>
<path d="M358 327.6 H350.4 L358 320 Z" fill="#8d8d8d"/>
<path d="M18.2 362.5 A30 30 0 0 1 22.6 353.8 M27.6 348.5 A30 30 0 0 1 38.5 343.6" stroke="#dcdcdc" stroke-width="2" fill="none" />
<rect x="15.6" y="365.5" width="4.6" height="4.6" fill="#7fc0f7"/>
<rect x="22.6" y="348.4" width="4.6" height="4.6" fill="#7fc0f7"/>
<rect x="39.7" y="340.6" width="4.6" height="4.6" fill="#7fc0f7"/>
<path d="M60.4 366.5 C61 360 62.5 356 64.6 353 M69.8 351.8 L78 359.6 M84.6 358.5 C86.5 354 87.6 350 88 345.4" stroke="#dcdcdc" stroke-width="2" fill="none" />
<rect x="57.6" y="367.7" width="4.6" height="4.6" fill="#7fc0f7"/>
<rect x="63.7" y="347.6" width="4.6" height="4.6" fill="#7fc0f7"/>
<rect x="79.7" y="359.5" width="4.6" height="4.6" fill="#7fc0f7"/>
<rect x="85.7" y="339.5" width="4.6" height="4.6" fill="#7fc0f7"/>
<path d="M108 348 L128.3 348" stroke="#dcdcdc" stroke-width="2" fill="none" stroke-linecap="butt"/>
<path d="M108 364 L128.3 364" stroke="#dcdcdc" stroke-width="2" fill="none" stroke-linecap="butt"/>
<path d="M101.8 356 H114.6 M116.6 356 H119.8 M121.8 356 H134" stroke="#7fc0f7" stroke-width="2" fill="none" />
<path d="M151 366.8 L158.8 359.2" stroke="#dcdcdc" stroke-width="2" fill="none" stroke-linecap="butt"/>
<path d="M165.2 352.8 L173 345.2" stroke="#dcdcdc" stroke-width="2" fill="none" stroke-linecap="butt"/>
<path d="M145.8 371.8 L148.56 362.54 L155.06 369.04 Z" fill="#dcdcdc"/>
<path d="M178.2 340 L175.44 349.26 L168.94 342.76 Z" fill="#dcdcdc"/>
<rect x="159.7" y="353.7" width="4.6" height="4.6" fill="#7fc0f7"/>
<path d="M208.5 347 A13 9.5 0 1 0 216.8 360.5" stroke="#dcdcdc" stroke-width="2" fill="none" />
<path d="M209.5 347.2 A13 9.5 0 0 1 217.6 353" stroke="#dcdcdc" stroke-width="2" fill="none" />
<rect x="202.7" y="353.7" width="4.6" height="4.6" fill="#7fc0f7"/>
<rect x="202.7" y="344.5" width="4.6" height="4.6" fill="#7fc0f7"/>
<rect x="215.7" y="353.7" width="4.6" height="4.6" fill="#7fc0f7"/>
<path d="M239.5 346.3 A2.83 2.83 0 0 1 244.75 346.3 A2.83 2.83 0 0 1 250 346.3 A2.83 2.83 0 0 1 255.25 346.3 A2.83 2.83 0 0 1 260.5 346.3 A2.75 2.75 0 0 1 264 350 A2.2 2.2 0 0 1 264 354.07 A2.2 2.2 0 0 1 264 358.13 A2.2 2.2 0 0 1 264 362.2 A2.75 2.75 0 0 1 260.5 365.9 A2.83 2.83 0 0 1 255.25 365.9 A2.83 2.83 0 0 1 250 365.9 A2.83 2.83 0 0 1 244.75 365.9 A2.83 2.83 0 0 1 239.5 365.9 A2.75 2.75 0 0 1 236 362.2 A2.2 2.2 0 0 1 236 358.13 A2.2 2.2 0 0 1 236 354.07 A2.2 2.2 0 0 1 236 350 A2.75 2.75 0 0 1 239.5 346.3" stroke="#dcdcdc" stroke-width="2" fill="none" />
<path d="M278.8 340.5 L291.6 353.8" stroke="#dcdcdc" stroke-width="2" fill="none" stroke-linecap="butt"/>
<path d="M309.4 340.5 L296.4 353.6" stroke="#dcdcdc" stroke-width="2" fill="none" stroke-linecap="butt"/>
<path d="M278.8 371.2 L291.4 358.4" stroke="#dcdcdc" stroke-width="2" fill="none" stroke-linecap="butt"/>
<rect x="291.5" y="353.7" width="4.6" height="4.6" fill="#7fc0f7"/>
<path d="M321.8 354.5 H330.4 L334.8 344 L341.4 368.5 L346 354.5 H354.2" stroke="#dcdcdc" stroke-width="2" fill="none" stroke-linejoin="miter"/>
<path d="M52 378 H44.4 L52 370.4 Z" fill="#8d8d8d"/>
<path d="M96 378 H88.4 L96 370.4 Z" fill="#8d8d8d"/>
<path d="M140 378 H132.4 L140 370.4 Z" fill="#8d8d8d"/>
<path d="M184 378 H176.4 L184 370.4 Z" fill="#8d8d8d"/>
<path d="M228 378 H220.4 L228 370.4 Z" fill="#8d8d8d"/>
<path d="M272 378 H264.4 L272 370.4 Z" fill="#8d8d8d"/>
<path d="M316 378 H308.4 L316 370.4 Z" fill="#8d8d8d"/>
<rect x="8" y="390.2" width="352" height="2" fill="#252b37"/>
<path d="M8.6 412.2 H25.8 L17.2 421.2 Z" fill="#f2f2f2"/><text x="34.3" y="421.2" font-size="19.5" fill="#f2f2f2" stroke="#f2f2f2" stroke-width="0.35" letter-spacing="0.23">Hatch</text><g transform="translate(348.3 415.6)"><circle r="6" fill="#f4f4f4"/><rect x="-1.75" y="-9.4" width="3.5" height="4.9" rx="0.5" fill="#f4f4f4" transform="rotate(0)"/><rect x="-1.75" y="-9.4" width="3.5" height="4.9" rx="0.5" fill="#f4f4f4" transform="rotate(45)"/><rect x="-1.75" y="-9.4" width="3.5" height="4.9" rx="0.5" fill="#f4f4f4" transform="rotate(90)"/><rect x="-1.75" y="-9.4" width="3.5" height="4.9" rx="0.5" fill="#f4f4f4" transform="rotate(135)"/><rect x="-1.75" y="-9.4" width="3.5" height="4.9" rx="0.5" fill="#f4f4f4" transform="rotate(180)"/><rect x="-1.75" y="-9.4" width="3.5" height="4.9" rx="0.5" fill="#f4f4f4" transform="rotate(225)"/><rect x="-1.75" y="-9.4" width="3.5" height="4.9" rx="0.5" fill="#f4f4f4" transform="rotate(270)"/><rect x="-1.75" y="-9.4" width="3.5" height="4.9" rx="0.5" fill="#f4f4f4" transform="rotate(315)"/><circle r="2" fill="#3d4352"/></g>
<path d="M32 469.6 L43.6 458 M32 479.2 L53.2 458 M32 488.8 L62.8 458 M32.4 498 L72 458.4 M42 498 L72 468 M51.6 498 L72 477.6 M61.2 498 L72 487.2" stroke="#7fc0f7" stroke-width="2" fill="none" />
<path d="M29 445.8 V510 M75 445.8 V510 M20 454.9 H84 M20 501.2 H84" stroke="#dcdcdc" stroke-width="2" fill="none" />
<path d="M120.5 469.6 L132.1 458 M120.5 479.2 L141.7 458 M120.5 488.8 L151.3 458 M120.9 498 L160 458.9 M130.5 498 L160 468.5 M140.1 498 L160 478.1 M149.7 498 L160 487.7" stroke="#7fc0f7" stroke-width="2" fill="none" />
<path d="M117 445.8 V510 M162.8 445.8 V510 M108 454.9 H171.8 M108 501.2 H171.8" stroke="#dcdcdc" stroke-width="2" fill="none" />
<rect x="126" y="445" width="28.5" height="12.5" fill="#3d4352" />
<path d="M128.3 456 L129.6 453 H132.6 L133.4 448.6 Q133.6 448 134.4 448 H146 Q146.8 448 147 448.6 L147.8 453 H150.8 L152 456 Z" fill="#ffffff" />
<path d="M182 519.8 H174.4 L182 512.2 Z" fill="#8d8d8d"/>
<defs><linearGradient id="hg" x1="0" y1="0" x2="0" y2="1"><stop offset="0" stop-color="#8fc6f8"/><stop offset="0.25" stop-color="#8db8e4"/><stop offset="1" stop-color="#3e4555"/></linearGradient></defs>
<rect x="208" y="458" width="40.3" height="40.4" fill="url(#hg)" />
<path d="M205 445.8 V510 M251 445.8 V510 M196 454.9 H260 M196 501.2 H260" stroke="#dcdcdc" stroke-width="2" fill="none" />
<path d="M283 440 V472 M305 440 V472 M278 445 H310 M278 467 H310" stroke="#7fc0f7" stroke-width="2" fill="none" />
<path d="M321.8 443.2 H342 L354.2 455.6 V468.8 H321.8 Z" fill="#dcdcdc" />
<circle cx="337" cy="456" r="4.6" fill="#3d4352"/>
<defs><pattern id="stripe" width="5.4" height="5.4" patternUnits="userSpaceOnUse" patternTransform="rotate(-45)"><rect width="5.4" height="5.4" fill="#8e8e8e"/><rect width="5.4" height="2.9" fill="#e4e4e4"/></pattern></defs>
<rect x="278" y="484" width="32" height="32.3" fill="url(#stripe)" />
<rect x="282.6" y="488.6" width="22.8" height="23" fill="#3d4352" />
<path d="M284.2 492.2 H295.4 V497.6 H304 V508 H284.2 Z" fill="#99c9f5" />
<rect x="8" y="534" width="352" height="2" fill="#252b37"/>
<path d="M8.6 556 H25.8 L17.2 565 Z" fill="#f2f2f2"/><text x="34.3" y="565" font-size="19.5" fill="#f2f2f2" stroke="#f2f2f2" stroke-width="0.35" letter-spacing="0.46">Block</text><g transform="translate(348.3 559.4)"><circle r="6" fill="#f4f4f4"/><rect x="-1.75" y="-9.4" width="3.5" height="4.9" rx="0.5" fill="#f4f4f4" transform="rotate(0)"/><rect x="-1.75" y="-9.4" width="3.5" height="4.9" rx="0.5" fill="#f4f4f4" transform="rotate(45)"/><rect x="-1.75" y="-9.4" width="3.5" height="4.9" rx="0.5" fill="#f4f4f4" transform="rotate(90)"/><rect x="-1.75" y="-9.4" width="3.5" height="4.9" rx="0.5" fill="#f4f4f4" transform="rotate(135)"/><rect x="-1.75" y="-9.4" width="3.5" height="4.9" rx="0.5" fill="#f4f4f4" transform="rotate(180)"/><rect x="-1.75" y="-9.4" width="3.5" height="4.9" rx="0.5" fill="#f4f4f4" transform="rotate(225)"/><rect x="-1.75" y="-9.4" width="3.5" height="4.9" rx="0.5" fill="#f4f4f4" transform="rotate(270)"/><rect x="-1.75" y="-9.4" width="3.5" height="4.9" rx="0.5" fill="#f4f4f4" transform="rotate(315)"/><circle r="2" fill="#3d4352"/></g>
<rect x="22.5" y="614.6" width="37" height="28.4" fill="#6d7484" stroke="#dcdcdc" stroke-width="2" /><circle cx="59" cy="640.7" r="12.8" fill="#6d7484" stroke="#dcdcdc" stroke-width="2"/><path d="M59.5 627.9 V643 H46.2" stroke="#dcdcdc" stroke-width="2" fill="none" /><rect x="19.5" y="640" width="6" height="6" fill="#dcdcdc" />
<path d="M67.2 587.7 L70.44 597.21 L78.66 591.42 L75.69 601.03 L85.75 601.17 L77.7 607.2 L85.75 613.23 L75.69 613.37 L78.66 622.98 L70.44 617.19 L67.2 626.7 L63.96 617.19 L55.74 622.98 L58.71 613.37 L48.65 613.23 L56.7 607.2 L48.65 601.17 L58.71 601.03 L55.74 591.42 L63.96 597.21 Z" fill="#3d4352"/>
<path d="M67.2 590.6 L69.61 599.78 L76.96 593.77 L73.51 602.62 L82.99 602.07 L75 607.2 L82.99 612.33 L73.51 611.78 L76.96 620.63 L69.61 614.62 L67.2 623.8 L64.79 614.62 L57.44 620.63 L60.89 611.78 L51.41 612.33 L59.4 607.2 L51.41 602.07 L60.89 602.62 L57.44 593.77 L64.79 599.78 Z" fill="#f8d47c"/>
<path d="M136.8 592 H159 V603 H170.2 V635.6 H136.8 Z" fill="#99c9f5" />
<path d="M161 592 L170.2 601.2 H161 Z" fill="#c4e0fa" />
<rect x="110" y="608.4" width="42" height="31" fill="#3d4352" />
<circle cx="149" cy="637.2" r="17" fill="#3d4352"/>
<rect x="112.3" y="610.7" width="37.3" height="26.5" fill="#6d7484" stroke="#dcdcdc" stroke-width="2" /><circle cx="149" cy="637.2" r="14.5" fill="#6d7484" stroke="#dcdcdc" stroke-width="2"/><path d="M149.6 622.7 V637.2 H134.5" stroke="#dcdcdc" stroke-width="2" fill="none" /><rect x="109.3" y="634.2" width="6" height="6" fill="#dcdcdc" />
<rect x="200.6" y="608.4" width="40.4" height="30.3" fill="#6d7484" stroke="#dcdcdc" stroke-width="2" /><circle cx="241" cy="637.2" r="12.6" fill="#6d7484" stroke="#dcdcdc" stroke-width="2"/><path d="M241 624.6 V638.7 H228.4" stroke="#dcdcdc" stroke-width="2" fill="none" /><rect x="197.6" y="635.7" width="6" height="6" fill="#dcdcdc" />
<g transform="translate(225.4 625.5) rotate(-44.22)"><path d="M-3 0 L8 -7.95 H33.04 V7.95 H8 Z" fill="#3d4352"/><path d="M0 0 L9.5 -5.75 V5.75 Z" fill="#d6d6d6"/><rect x="11.5" y="-5.75" width="20.8" height="11.5" fill="#f8d27a"/><path d="M33.8 -5.75 H35.55 A5.75 5.75 0 0 1 35.55 5.75 H33.8 Z" fill="#ec6d6d"/></g>
<path d="M284.2 594.4 H308.6 L343.6 625.5 L315.6 653.8 L284.2 620.8 Z" fill="#dcdcdc" />
<circle cx="296.2" cy="606" r="4" fill="#3d4352"/>
<path d="M298 621 L311 608 M304 627.6 L318 613.6 M310.6 634 L326 618.6 M317.4 640.6 L329 629" stroke="#5a5f6b" stroke-width="2" fill="none" />
<g transform="translate(314.8 622.4) rotate(-42.71)"><path d="M-3 0 L8 -7.95 H33.97 V7.95 H8 Z" fill="#3d4352"/><path d="M0 0 L9.5 -5.75 V5.75 Z" fill="#d6d6d6"/><rect x="11.5" y="-5.75" width="21.96" height="11.5" fill="#f8d27a"/><path d="M34.96 -5.75 H36.71 A5.75 5.75 0 0 1 36.71 5.75 H34.96 Z" fill="#ec6d6d"/></g>
<path d="M358 663.6 H350.4 L358 656 Z" fill="#8d8d8d"/>
<path d="M14.8 677 H28.8 L45 692.6 L31 706.6 L14.8 691 Z" fill="#dcdcdc" /><circle cx="21.5" cy="683" r="2.1" fill="#3d4352"/><path d="M19.8 690 l2 2 M24.4 694.6 l7.6 7.6 M24.8 685 l2 2 M29.4 689.6 l7.6 7.6" stroke="#5a5f6b" stroke-width="2" fill="none" />
<rect x="59.8" y="686.4" width="18.4" height="14.8" fill="#6d7484" stroke="#dcdcdc" stroke-width="2" /><circle cx="78.2" cy="701.2" r="6.5" fill="#6d7484" stroke="#dcdcdc" stroke-width="2"/><path d="M78.2 694.7 V701.2 H71.7" stroke="#dcdcdc" stroke-width="2" fill="none" /><rect x="57.5" y="698.9" width="4.6" height="4.6" fill="#dcdcdc" />
<rect x="70" y="673.9" width="22.2" height="20.3" fill="#3d4352" /><rect x="72" y="675.9" width="18.2" height="16.3" fill="#efefef" /><rect x="72" y="675.9" width="18.2" height="3.8" fill="#9c9c9c" /><rect x="75.4" y="682.9" width="2" height="2" fill="#4a4f5a" /><rect x="79" y="682.9" width="7.7" height="2" fill="#4a4f5a" /><rect x="75.4" y="686.9" width="2" height="2" fill="#4a4f5a" /><rect x="79" y="686.9" width="7.7" height="2" fill="#4a4f5a" />
<rect x="103.6" y="686.4" width="18.4" height="14.8" fill="#6d7484" stroke="#dcdcdc" stroke-width="2" /><circle cx="122" cy="701.2" r="6.5" fill="#6d7484" stroke="#dcdcdc" stroke-width="2"/><path d="M122 694.7 V701.2 H115.5" stroke="#dcdcdc" stroke-width="2" fill="none" /><rect x="101.3" y="698.9" width="4.6" height="4.6" fill="#dcdcdc" />
<rect x="116.2" y="673.5" width="19.8" height="20.7" fill="#3d4352" />
<path d="M118.2 675.5 H134 V692.2 H120 L118.2 690.4 Z" fill="#b9b9b9" />
<rect x="121.2" y="674.5" width="9.8" height="7.6" fill="#3d4352" />
<rect x="122.4" y="675.5" width="7.4" height="5.4" fill="#efefef" />
<rect x="121.2" y="686" width="10" height="7" fill="#3d4352" />
<rect x="122.4" y="687.2" width="7.6" height="5" fill="#efefef" />
<rect x="123.6" y="688.4" width="1.6" height="2.6" fill="#3d4352" />
<rect x="147" y="677.3" width="25.8" height="25.5" fill="#6d7484" stroke="#dcdcdc" stroke-width="2" />
<rect x="163" y="693.5" width="18" height="18" fill="#3d4352" />
<path d="M172 695.3 V709.3 M165 702.3 H179" stroke="#7fc0f7" stroke-width="4.4" fill="none" />
<path d="M189.7 678.3 H203.7 L219.9 693.9 L205.9 707.9 L189.7 692.3 Z" fill="#dcdcdc" /><circle cx="196.4" cy="684.3" r="2.1" fill="#3d4352"/><path d="M194.7 691.3 l2 2 M199.3 695.9 l7.6 7.6 M199.7 686.3 l2 2 M204.3 690.9 l7.6 7.6" stroke="#5a5f6b" stroke-width="2" fill="none" />
<circle cx="214.2" cy="683.6" r="9.6" fill="#3d4352"/>
<path d="M208.94 681.68 A5.6 5.6 0 0 1 218.49 680" fill="none" stroke="#72d080" stroke-width="2.6"/><path d="M220.16 681.99 L214.81 679.17 L220.82 675.98 Z" fill="#72d080"/><path d="M219.46 685.52 A5.6 5.6 0 0 1 209.91 687.2" fill="none" stroke="#72d080" stroke-width="2.6"/><path d="M208.24 685.21 L213.59 688.03 L207.58 691.22 Z" fill="#72d080"/>
<path d="M234 678.3 H248 L264.2 693.9 L250.2 707.9 L234 692.3 Z" fill="#dcdcdc" /><circle cx="240.7" cy="684.3" r="2.1" fill="#3d4352"/><path d="M239 691.3 l2 2 M243.6 695.9 l7.6 7.6 M244 686.3 l2 2 M248.6 690.9 l7.6 7.6" stroke="#5a5f6b" stroke-width="2" fill="none" />
<rect x="248.5" y="674.5" width="19" height="19" fill="#3d4352" />
<rect x="253.4" y="679.4" width="9.2" height="9.2" fill="#6aa4dc" />
<path d="M254 676.6 H262 M254 691.4 H262 M250.6 680 V688 M265.4 680 V688" stroke="#7fc0f7" stroke-width="2.2" fill="none" />
<rect x="280" y="677.3" width="13" height="7.6" fill="#6d7484" stroke="#dcdcdc" stroke-width="2" /><circle cx="293" cy="684.9" r="4.6" fill="#6d7484" stroke="#dcdcdc" stroke-width="2"/><path d="M293 680.3 V684.9 H288.4" stroke="#dcdcdc" stroke-width="2" fill="none" /><rect x="277.7" y="682.6" width="4.6" height="4.6" fill="#dcdcdc" />
<path d="M309.4 688 V681 H304" stroke="#ffffff" stroke-width="2.2" fill="none" />
<path d="M299.6 681 L305.2 677.2 L305.2 684.8 Z" fill="#ffffff"/>
<rect x="288.3" y="693.6" width="15.7" height="8.1" fill="#4a6488" stroke="#7fc0f7" stroke-width="2" /><circle cx="304" cy="701.7" r="5.4" fill="#4a6488" stroke="#7fc0f7" stroke-width="2"/><path d="M304 696.3 V701.7 H298.6" stroke="#7fc0f7" stroke-width="2" fill="none" /><rect x="286" y="699.4" width="4.6" height="4.6" fill="#7fc0f7" />
<rect x="8" y="726" width="352" height="2" fill="#252b37"/>
<path d="M8.6 748 H25.8 L17.2 757 Z" fill="#f2f2f2"/><text x="34.3" y="757" font-size="19.5" fill="#f2f2f2" stroke="#f2f2f2" stroke-width="0.35" letter-spacing="0.43">Modify</text><g transform="translate(348.3 751.4)"><circle r="6" fill="#f4f4f4"/><rect x="-1.75" y="-9.4" width="3.5" height="4.9" rx="0.5" fill="#f4f4f4" transform="rotate(0)"/><rect x="-1.75" y="-9.4" width="3.5" height="4.9" rx="0.5" fill="#f4f4f4" transform="rotate(45)"/><rect x="-1.75" y="-9.4" width="3.5" height="4.9" rx="0.5" fill="#f4f4f4" transform="rotate(90)"/><rect x="-1.75" y="-9.4" width="3.5" height="4.9" rx="0.5" fill="#f4f4f4" transform="rotate(135)"/><rect x="-1.75" y="-9.4" width="3.5" height="4.9" rx="0.5" fill="#f4f4f4" transform="rotate(180)"/><rect x="-1.75" y="-9.4" width="3.5" height="4.9" rx="0.5" fill="#f4f4f4" transform="rotate(225)"/><rect x="-1.75" y="-9.4" width="3.5" height="4.9" rx="0.5" fill="#f4f4f4" transform="rotate(270)"/><rect x="-1.75" y="-9.4" width="3.5" height="4.9" rx="0.5" fill="#f4f4f4" transform="rotate(315)"/><circle r="2" fill="#3d4352"/></g>
<path d="M52 790 V838 M28 814 H76" stroke="#ffffff" stroke-width="4.8" fill="none" />
<path d="M52 782 L62 798.4 L42 798.4 Z" fill="#ffffff"/>
<path d="M52 846 L42 829.6 L62 829.6 Z" fill="#ffffff"/>
<path d="M20.2 814 L36.6 804 L36.6 824 Z" fill="#ffffff"/>
<path d="M84 814 L67.6 824 L67.6 804 Z" fill="#ffffff"/>
<circle cx="108.8" cy="782.9" r="5.8" fill="none" stroke="#dcdcdc" stroke-width="2"/>
<path d="M118.5 779.8 H127.5 V784" stroke="#ffffff" stroke-width="2.2" fill="none" />
<path d="M127.5 790.2 L123.6 783.8 L131.4 783.8 Z" fill="#ffffff"/>
<circle cx="117" cy="801" r="5.8" fill="none" stroke="#7fc0f7" stroke-width="2.2"/>
<path d="M124.6 796 A5.8 5.8 0 1 1 124.6 806" stroke="#7fc0f7" stroke-width="2.2" fill="none" />
<path d="M166.2 781 A13.5 13.5 0 1 0 175.5 793.2" stroke="#ffffff" stroke-width="2.2" fill="none" />
<path d="M170 779.2 L163.72 785.24 L161.81 776.24 Z" fill="#ffffff"/>
<path d="M196.2 787 H204.6 M208 787 H216.4 M219.6 787 H227.8" stroke="#7fc0f7" stroke-width="2" fill="none" />
<path d="M244.4 787 L260 787" stroke="#dcdcdc" stroke-width="2" fill="none" stroke-linecap="butt"/>
<path d="M232.4 782.4 L240.6 790.5 L237.6 822 L231.6 816 Z" fill="#ffffff" />
<path d="M211.6 794.6 L212 807 L232.5 826 L239.5 818.5 Z" fill="#ffffff" />
<circle cx="235" cy="820.4" r="1.9" fill="#3d4352"/>
<ellipse cx="230.4" cy="835" rx="5.6" ry="9" fill="none" stroke="#fff" stroke-width="4" transform="rotate(12 230.4 835)"/>
<ellipse cx="246.6" cy="830.6" rx="5.6" ry="9" fill="none" stroke="#fff" stroke-width="4" transform="rotate(-52 246.6 830.6)"/>
<path d="M270.2 855.6 H262.6 L270.2 848 Z" fill="#8d8d8d"/>
<path d="M279 793 A16.4 16.4 0 0 1 295.4 776.7" stroke="#7fc0f7" stroke-width="2.2" fill="none" />
<path d="M298.2 776.7 L310 776.7" stroke="#dcdcdc" stroke-width="2" fill="none" stroke-linecap="butt"/>
<path d="M279 796 L279 807.8" stroke="#dcdcdc" stroke-width="2" fill="none" stroke-linecap="butt"/>
<path d="M316 814 H308.4 L316 806.4 Z" fill="#8d8d8d"/>
<rect x="324.2" y="778.2" width="12.1" height="11.7" fill="#dcdcdc" />
<rect x="340" y="778.2" width="12.1" height="11.7" fill="#99c9f5" />
<rect x="324.2" y="794.5" width="12.1" height="11.7" fill="#99c9f5" />
<rect x="340" y="794.5" width="12.1" height="11.7" fill="#99c9f5" />
<path d="M360 814 H352.4 L360 806.4 Z" fill="#8d8d8d"/>
<path d="M116.6 825.5 V848.7 H105.2 Z" stroke="#dcdcdc" stroke-width="2" fill="none" />
<path d="M119.7 825.5 V848.7 H131.2 Z" stroke="#7fc0f7" stroke-width="2" fill="none" />
<path d="M147.7 821.7 H168 M147.7 842 H160 M147.7 821.7 V842 M168 821.7 V830" stroke="#dcdcdc" stroke-width="1.4" fill="none" stroke-dasharray="3 2.4"/>
<rect x="145.6" y="819.6" width="4.2" height="4.2" fill="#ffffff"/>
<rect x="155.7" y="819.6" width="4.2" height="4.2" fill="#ffffff"/>
<rect x="165.9" y="819.6" width="4.2" height="4.2" fill="#ffffff"/>
<rect x="145.6" y="829.7" width="4.2" height="4.2" fill="#ffffff"/>
<rect x="145.6" y="839.9" width="4.2" height="4.2" fill="#ffffff"/>
<rect x="155.7" y="839.9" width="4.2" height="4.2" fill="#ffffff"/>
<rect x="155.7" y="829.7" width="4.2" height="4.2" fill="#ffffff"/>
<path d="M172 831 H178.4 M175.2 827.8 V834.2" stroke="#ffffff" stroke-width="1.8" fill="none" />
<path d="M163.4 832.4 L164 851.6 L169 846.4 L178.2 846.2 Z" fill="#ffffff" />
<path d="M310.2 824.9 H290 A11.05 11.05 0 0 0 290 847 H310.2" stroke="#7fc0f7" stroke-width="2.2" fill="none" />
<path d="M310.2 830.3 H290 A5.45 5.45 0 0 0 290 841.2 H310.2" stroke="#dcdcdc" stroke-width="2.2" fill="none" />
<rect x="327.5" y="833.6" width="15.1" height="15.1" fill="none" stroke="#dcdcdc" stroke-width="2" />
<path d="M322.8 832.6 V849.7" stroke="#7fc0f7" stroke-width="2" fill="none" />
<path d="M327.4 831 L334.6 824.3 H352.7 L345.6 831 Z M347.2 833 L352.7 827.6 V842.6 L347.2 848.4 Z" stroke="#7fc0f7" stroke-width="2" fill="none" />
<path d="M28 878 V868.4 H15.5 V899.5 H28 V895" stroke="#dcdcdc" stroke-width="2" fill="none" />
<path d="M30.3 869.4 H35.8 L44.6 898.5 H30.3" stroke="#7fc0f7" stroke-width="2" fill="none" />
<path d="M22 891.2 L31 891.2" stroke="#ffffff" stroke-width="2.2" fill="none" stroke-linecap="butt"/>
<path d="M36.8 891.2 L30.2 895.2 L30.2 887.2 Z" fill="#ffffff"/>
<path d="M58 871.4 L61.6 867.6 H76.2 V882.2 L72.6 886 H58 Z" fill="#d0d0d0" />
<path d="M58 871.4 L61.6 867.6 H76.2 L72.6 871.4 Z" fill="#f0f0f0" />
<path d="M72.6 871.4 L76.2 867.6 V882.2 L72.6 886 Z" fill="#bdbdbd" />
<rect x="76.2" y="886.3" width="13.7" height="13.7" fill="#99c9f5" />
<path d="M60.6 890.2 V894.4 H66" stroke="#ffffff" stroke-width="2" fill="none" />
<path d="M70.9 894.4 L65.3 898 L65.3 890.8 Z" fill="#ffffff"/>
<path d="M103.6 880 V869.4 H132.7 V898.5 H122.4" stroke="#7fc0f7" stroke-width="2" fill="none" />
<rect x="103.6" y="884.2" width="14.8" height="14.3" fill="none" stroke="#dcdcdc" stroke-width="2" />
<path d="M146.6 899 L177.2 868.9" stroke="#dcdcdc" stroke-width="2.2" fill="none" stroke-linecap="butt"/>
<path d="M155.5 878.5 L168 889.4" stroke="#7fc0f7" stroke-width="2.4" fill="none" stroke-linecap="butt"/>
<path d="M184 905.7 H176.4 L184 898.1 Z" fill="#8d8d8d"/>
<path d="M190 884.4 L222 884.4" stroke="#dcdcdc" stroke-width="2" fill="none" stroke-linecap="butt"/>
<path d="M197 879.5 V889.3 L205.4 884.4 Z" fill="#7fc0f7" />
<path d="M215.3 879.5 V889.3 L206.9 884.4 Z" fill="#7fc0f7" />
<rect x="234" y="870.4" width="19.7" height="15.1" fill="#b9b9b9" />
<rect x="245.4" y="881.8" width="21.2" height="16.2" fill="#3d4352" />
<rect x="247.4" y="883.8" width="17.2" height="12.2" fill="none" stroke="#dcdcdc" stroke-width="2" />
<path d="M251.5 893.4 H259.6 L256 886.8 Z" fill="#b9b9b9" />
<path d="M256.4 872.8 H262.2 V875" stroke="#ffffff" stroke-width="2" fill="none" />
<path d="M262.2 880.2 L258.6 875 L265.8 875 Z" fill="#ffffff"/>
<path d="M243.6 895.4 H237.2 V893" stroke="#ffffff" stroke-width="2" fill="none" />
<path d="M237.2 888 L240.8 893.2 L233.6 893.2 Z" fill="#ffffff"/>
<rect x="280" y="869.4" width="16.2" height="11.4" fill="#6d7484" stroke="#dcdcdc" stroke-width="2" /><circle cx="296.2" cy="880.8" r="6.4" fill="#6d7484" stroke="#dcdcdc" stroke-width="2"/><path d="M296.2 874.4 V880.8 H289.8" stroke="#dcdcdc" stroke-width="2" fill="none" /><rect x="277.7" y="878.5" width="4.6" height="4.6" fill="#dcdcdc" />
<path d="M283.3 888.6 V894 H289" stroke="#ffffff" stroke-width="2.2" fill="none" />
<path d="M294.4 894 L288.4 897.9 L288.4 890.1 Z" fill="#ffffff"/>
<circle cx="304" cy="894" r="5.2" fill="none" stroke="#7fc0f7" stroke-width="2.2"/>
<rect x="336.3" y="868" width="2.8" height="20" fill="#e8c488" />
<path d="M337.7 886 L341.4 893.6 H334 Z" fill="#c9a064" />
<path d="M335 891.8 H340.4 L347 900 H328.6 Z" fill="#f6d484" />
<rect x="8" y="918" width="352" height="2" fill="#252b37"/>
<path d="M8.6 940 H25.8 L17.2 949 Z" fill="#f2f2f2"/><text x="34.3" y="949" font-size="19.5" fill="#f2f2f2" stroke="#f2f2f2" stroke-width="0.35" letter-spacing="-0.23">Text</text><g transform="translate(348.3 943.4)"><circle r="6" fill="#f4f4f4"/><rect x="-1.75" y="-9.4" width="3.5" height="4.9" rx="0.5" fill="#f4f4f4" transform="rotate(0)"/><rect x="-1.75" y="-9.4" width="3.5" height="4.9" rx="0.5" fill="#f4f4f4" transform="rotate(45)"/><rect x="-1.75" y="-9.4" width="3.5" height="4.9" rx="0.5" fill="#f4f4f4" transform="rotate(90)"/><rect x="-1.75" y="-9.4" width="3.5" height="4.9" rx="0.5" fill="#f4f4f4" transform="rotate(135)"/><rect x="-1.75" y="-9.4" width="3.5" height="4.9" rx="0.5" fill="#f4f4f4" transform="rotate(180)"/><rect x="-1.75" y="-9.4" width="3.5" height="4.9" rx="0.5" fill="#f4f4f4" transform="rotate(225)"/><rect x="-1.75" y="-9.4" width="3.5" height="4.9" rx="0.5" fill="#f4f4f4" transform="rotate(270)"/><rect x="-1.75" y="-9.4" width="3.5" height="4.9" rx="0.5" fill="#f4f4f4" transform="rotate(315)"/><circle r="2" fill="#3d4352"/></g>
<text x="25.8" y="1034" font-size="78" fill="#dcdcdc" font-weight="normal" stroke="#dcdcdc" stroke-width="0.9">A</text>
<text x="107.8" y="1023.7" font-size="69.4" fill="#dcdcdc" font-weight="normal" stroke="#dcdcdc" stroke-width="0.8">A</text>
<rect x="0" y="0" width="0" height="0" fill="#3d4352" />
<g><g transform="translate(171.8 1008.6) rotate(140.79)"><rect x="0" y="-3.6" width="16.4" height="7.2" fill="#efefef"/><rect x="16.4" y="-4.6" width="2.6" height="9.2" fill="#3d4352"/><path d="M19 -3.5 C30.39 -7.2 42.69 -5.6 45.56 1.6 C38.14 4.9 27.2 4.6 19 3.5 Z" fill="#d4b07a"/></g></g>
<text x="193.4" y="995.9" font-size="38" fill="#dcdcdc" font-weight="normal" >A</text>
<path d="M190 999 L222 999" stroke="#7fc0f7" stroke-width="2" fill="none" stroke-linecap="butt"/>
<text x="235" y="979.6" font-size="12.8" fill="#dcdcdc" font-weight="bold" letter-spacing="0.9">ABC</text>
<path d="M240.6 990.4 L247.2 996.6 L258.6 984.6" stroke="#72d080" stroke-width="4.2" fill="none" />
<rect x="286.4" y="982.2" width="23.8" height="7.5" fill="#99c9f5" /><rect x="286.4" y="992.3" width="23.8" height="7.7" fill="#dcdcdc" /><rect x="276.5" y="966.7" width="20.9" height="20.4" fill="#3d4352" /><rect x="278" y="968.2" width="17.9" height="17.4" fill="#efefef" /><rect x="282" y="972.2" width="2" height="2" fill="#2a7de1" /><rect x="285.4" y="972.2" width="6.6" height="2" fill="#2a7de1" /><rect x="282" y="976.2" width="2" height="2" fill="#2a7de1" /><rect x="285.4" y="976.2" width="6.6" height="2" fill="#2a7de1" /><rect x="282" y="980.2" width="2" height="2" fill="#2a7de1" /><rect x="285.4" y="980.2" width="6.6" height="2" fill="#2a7de1" /><text x="297.4" y="979.5" font-size="15.2" fill="#7fc0f7" font-weight="bold" >A</text>
<text x="323.4" y="977.9" font-size="10.6" fill="#dcdcdc" font-weight="bold" letter-spacing="1">PDF</text>
<path d="M327 983 V991.5 H331.4" stroke="#ffffff" stroke-width="2" fill="none" />
<path d="M336.8 991.5 L331 995.3 L331 987.7 Z" fill="#ffffff"/>
<text x="337.6" y="997.7" font-size="21.6" fill="#7fc0f7" font-weight="normal" >A</text>
<rect x="190" y="1012" width="21.8" height="23.8" fill="#dcdcdc" />
<path d="M194 1017 H208 M194 1021 H208 M194 1025 H208" stroke="#5a5f6b" stroke-width="2" fill="none" />
<path d="M214.2 1015 H218.9 V1018.6" stroke="#ffffff" stroke-width="2" fill="none" />
<path d="M218.9 1024.2 L215.1 1018.4 L222.7 1018.4 Z" fill="#ffffff"/>
<rect x="203" y="1026.5" width="20" height="19" fill="#3d4352" />
<text x="203.6" y="1044" font-size="23.4" fill="#ffffff" font-weight="normal" >A</text>
<circle cx="247.2" cy="1025.4" r="12.2" fill="none" stroke="#ffffff" stroke-width="2.2"/>
<text x="240.2" y="1030.8" font-size="15.8" fill="#dcdcdc" font-weight="normal" >A</text>
<path d="M256.6 1035 L265.2 1043.4" stroke="#d9ad6c" stroke-width="3" fill="none" stroke-linecap="butt"/>
<text x="279.2" y="1023.4" font-size="15.2" fill="#7fc0f7" font-weight="bold" >A</text>
<path d="M296.55 1017.02 A5.8 5.8 0 0 1 306.44 1015.27" fill="none" stroke="#72d080" stroke-width="2.6"/><path d="M308.11 1017.26 L302.76 1014.45 L308.77 1011.25 Z" fill="#72d080"/><path d="M307.45 1020.98 A5.8 5.8 0 0 1 297.56 1022.73" fill="none" stroke="#72d080" stroke-width="2.6"/><path d="M295.89 1020.74 L301.24 1023.55 L295.23 1026.75 Z" fill="#72d080"/>
<rect x="278" y="1026.2" width="24" height="7.3" fill="#99c9f5" />
<rect x="278" y="1036.3" width="24" height="7.7" fill="#dcdcdc" />
<text x="321.6" y="1019.9" font-size="10.6" fill="#dcdcdc" font-weight="bold" letter-spacing="1">PDF</text>
<path d="M325 1025 V1032.7 H329" stroke="#ffffff" stroke-width="2" fill="none" />
<path d="M334.4 1032.7 L328.6 1036.5 L328.6 1028.9 Z" fill="#ffffff"/>
<text x="334.5" y="1042" font-size="17" fill="#c9c9c9" font-weight="normal" font-style="italic">A</text>
<path d="M340.4 1042.8 L349 1035" stroke="#7fc0f7" stroke-width="3.4" fill="none" stroke-linecap="round"/>
<path d="M352.8 1030.2 A3.6 3.6 0 1 0 353.8 1035.2" stroke="#7fc0f7" stroke-width="2.4" fill="none" />
<rect x="8" y="1062" width="352" height="2" fill="#252b37"/>
<path d="M8.6 1084 H25.8 L17.2 1093 Z" fill="#f2f2f2"/><text x="34.3" y="1093" font-size="19.5" fill="#f2f2f2" stroke="#f2f2f2" stroke-width="0.35" letter-spacing="0.1">Dimension</text><g transform="translate(348.3 1087.4)"><circle r="6" fill="#f4f4f4"/><rect x="-1.75" y="-9.4" width="3.5" height="4.9" rx="0.5" fill="#f4f4f4" transform="rotate(0)"/><rect x="-1.75" y="-9.4" width="3.5" height="4.9" rx="0.5" fill="#f4f4f4" transform="rotate(45)"/><rect x="-1.75" y="-9.4" width="3.5" height="4.9" rx="0.5" fill="#f4f4f4" transform="rotate(90)"/><rect x="-1.75" y="-9.4" width="3.5" height="4.9" rx="0.5" fill="#f4f4f4" transform="rotate(135)"/><rect x="-1.75" y="-9.4" width="3.5" height="4.9" rx="0.5" fill="#f4f4f4" transform="rotate(180)"/><rect x="-1.75" y="-9.4" width="3.5" height="4.9" rx="0.5" fill="#f4f4f4" transform="rotate(225)"/><rect x="-1.75" y="-9.4" width="3.5" height="4.9" rx="0.5" fill="#f4f4f4" transform="rotate(270)"/><rect x="-1.75" y="-9.4" width="3.5" height="4.9" rx="0.5" fill="#f4f4f4" transform="rotate(315)"/><circle r="2" fill="#3d4352"/></g>
<path d="M20.7 1118.2 V1182 M83.2 1118.2 V1182" stroke="#dcdcdc" stroke-width="2" fill="none" />
<path d="M29 1131 L75 1131" stroke="#dcdcdc" stroke-width="2" fill="none" stroke-linecap="butt"/><path d="M22.4 1131 L30 1126.2 L30 1135.8 Z" fill="#dcdcdc"/><path d="M81.6 1131 L74 1135.8 L74 1126.2 Z" fill="#dcdcdc"/>
<path d="M49.69 1161.5 Q48.7 1157.9 52 1149.5 Q55.3 1157.9 54.31 1161.5 Z" fill="#f8d47c"/>
<path d="M59.74 1163.92 Q61.76 1160.77 70.21 1157.61 Q66.17 1165.68 62.84 1167.35 Z" fill="#f8d47c"/>
<path d="M41.16 1167.35 Q37.83 1165.68 33.79 1157.61 Q42.24 1160.77 44.26 1163.92 Z" fill="#f8d47c"/>
<path d="M63.36 1171.09 Q67.21 1169.9 76.47 1172.72 Q67.55 1176.49 63.61 1175.7 Z" fill="#f8d47c"/>
<path d="M40.39 1175.7 Q36.45 1176.49 27.53 1172.72 Q36.79 1169.9 40.64 1171.09 Z" fill="#f8d47c"/>
<path d="M109 1141.2 V1175 M171 1141.2 V1175" stroke="#dcdcdc" stroke-width="2" fill="none" />
<path d="M117.2 1158.3 L162.8 1158.3" stroke="#dcdcdc" stroke-width="2" fill="none" stroke-linecap="butt"/><path d="M110.6 1158.3 L118.2 1153.5 L118.2 1163.1 Z" fill="#dcdcdc"/><path d="M169.4 1158.3 L161.8 1163.1 L161.8 1153.5 Z" fill="#dcdcdc"/>
<g transform="translate(171.8 1124.9) rotate(139.83)"><rect x="0" y="-3.6" width="16.63" height="7.2" fill="#efefef"/><rect x="16.63" y="-4.6" width="2.6" height="9.2" fill="#3d4352"/><path d="M19.23 -3.5 C30.78 -7.2 43.25 -5.6 46.2 1.6 C38.63 4.9 27.55 4.6 19.23 3.5 Z" fill="#d4b07a"/></g>
<path d="M190.8 1114.3 V1142 M220.8 1114.3 V1142" stroke="#dcdcdc" stroke-width="2" fill="none" />
<path d="M197 1123.3 L214.6 1123.3" stroke="#7fc0f7" stroke-width="2" fill="none" stroke-linecap="butt"/><path d="M192.6 1123.3 L198 1120 L198 1126.6 Z" fill="#7fc0f7"/><path d="M219 1123.3 L213.6 1126.6 L213.6 1120 Z" fill="#7fc0f7"/>
<path d="M228 1149.8 H220.4 L228 1142.2 Z" fill="#8d8d8d"/>
<circle cx="249.8" cy="1128" r="14.2" fill="none" stroke="#dcdcdc" stroke-width="2"/>
<path d="M245 1128 H254.6 M249.8 1123.2 V1132.8" stroke="#7fc0f7" stroke-width="2.2" fill="none" />
<path d="M272 1149.8 H264.4 L272 1142.2 Z" fill="#8d8d8d"/>
<path d="M290.7 1112 V1134" stroke="#dcdcdc" stroke-width="2" fill="none" />
<path d="M290.7 1141.4 L286.3 1133.8 L295.1 1133.8 Z" fill="#dcdcdc"/>
<path d="M284.2 1142.8 L297.7 1142.8" stroke="#dcdcdc" stroke-width="2" fill="none" stroke-linecap="butt"/>
<path d="M278.3 1124.9 L288 1124.9" stroke="#7fc0f7" stroke-width="2" fill="none" stroke-linecap="butt"/>
<path d="M294.3 1124.9 L300 1124.9" stroke="#7fc0f7" stroke-width="2" fill="none" stroke-linecap="butt"/>
<path d="M307.6 1124.9 L299.6 1129.5 L299.6 1120.3 Z" fill="#7fc0f7"/>
<path d="M309 1118.2 L309 1131.9" stroke="#dcdcdc" stroke-width="2" fill="none" stroke-linecap="butt"/>
<path d="M326.6 1116 L349.6 1116" stroke="#dcdcdc" stroke-width="2" fill="none" stroke-linecap="butt"/><path d="M322 1116 L327.6 1112.6 L327.6 1119.4 Z" fill="#dcdcdc"/><path d="M354.2 1116 L348.6 1119.4 L348.6 1112.6 Z" fill="#dcdcdc"/>
<path d="M326.6 1140.4 L349.6 1140.4" stroke="#dcdcdc" stroke-width="2" fill="none" stroke-linecap="butt"/><path d="M322 1140.4 L327.6 1137 L327.6 1143.8 Z" fill="#dcdcdc"/><path d="M354.2 1140.4 L348.6 1143.8 L348.6 1137 Z" fill="#dcdcdc"/>
<rect x="334" y="1119.4" width="8" height="17.4" fill="#f2c96a" />
<path d="M334 1123 H338.4 M334 1126.4 H337.4 M334 1129.8 H338.4 M334 1133.2 H337.4" stroke="#5a5f6b" stroke-width="1.4" fill="none" />
<path d="M192 1158.3 V1186 M206 1158.3 V1186 M220 1158.3 V1186" stroke="#dcdcdc" stroke-width="2" fill="none" />
<path d="M196.8 1167.1 L201.2 1167.1" stroke="#7fc0f7" stroke-width="2" fill="none" stroke-linecap="butt"/><path d="M193.6 1167.1 L197.8 1164.1 L197.8 1170.1 Z" fill="#7fc0f7"/><path d="M204.4 1167.1 L200.2 1170.1 L200.2 1164.1 Z" fill="#7fc0f7"/>
<path d="M210.8 1167.1 L215.2 1167.1" stroke="#7fc0f7" stroke-width="2" fill="none" stroke-linecap="butt"/><path d="M207.6 1167.1 L211.8 1164.1 L211.8 1170.1 Z" fill="#7fc0f7"/><path d="M218.4 1167.1 L214.2 1170.1 L214.2 1164.1 Z" fill="#7fc0f7"/>
<path d="M228 1194.2 H220.4 L228 1186.6 Z" fill="#8d8d8d"/>
<rect x="235.5" y="1162" width="29" height="20.5" fill="none" stroke="#dcdcdc" stroke-width="2" />
<path d="M250.3 1162 L250.3 1182.5" stroke="#dcdcdc" stroke-width="2" fill="none" stroke-linecap="butt"/>
<circle cx="242.8" cy="1172" r="4.2" fill="none" stroke="#ffffff" stroke-width="2"/>
<path d="M235.5 1172 H250 M242.8 1165 V1179" stroke="#ffffff" stroke-width="2" fill="none" />
<text x="251.6" y="1180.2" font-size="16" fill="#ffffff" font-weight="normal" letter-spacing="-0.6" stroke="#fff" stroke-width="0.4">.1</text>
<path d="M279 1156.4 V1187.8 M309 1156.4 V1187.8" stroke="#dcdcdc" stroke-width="2" fill="none" />
<path d="M285.4 1163.3 L302.6 1163.3" stroke="#dcdcdc" stroke-width="2" fill="none" stroke-linecap="butt"/><path d="M281 1163.3 L286.4 1159.9 L286.4 1166.7 Z" fill="#dcdcdc"/><path d="M307 1163.3 L301.6 1166.7 L301.6 1159.9 Z" fill="#dcdcdc"/>
<path d="M287.8 1180 L292.8 1184.6 L301.2 1175.6" stroke="#72d080" stroke-width="4.2" fill="none" />
<path d="M322.3 1167.6 L333.5 1157" stroke="#dcdcdc" stroke-width="2" fill="none" stroke-linecap="butt"/>
<path d="M342 1187.5 L353.7 1176.6" stroke="#dcdcdc" stroke-width="2" fill="none" stroke-linecap="butt"/>
<path d="M331.6 1166.6 L344.4 1178.3" stroke="#dcdcdc" stroke-width="2" fill="none" stroke-linecap="butt"/>
<path d="M327.4 1162.8 L334.26 1164.19 L329.4 1169.5 Z" fill="#dcdcdc"/>
<path d="M348.6 1182.2 L341.74 1180.81 L346.6 1175.5 Z" fill="#dcdcdc"/>
<text x="339.8" y="1169.6" font-size="13.4" fill="#7fc0f7" font-weight="normal" stroke="#7fc0f7" stroke-width="0.5">X</text>
<path d="M360 1194.2 H352.4 L360 1186.6 Z" fill="#8d8d8d"/>
<rect x="8" y="1206" width="352" height="2" fill="#252b37"/>
<path d="M8.6 1228 H25.8 L17.2 1237 Z" fill="#f2f2f2"/><text x="34.3" y="1237" font-size="19.5" fill="#f2f2f2" stroke="#f2f2f2" stroke-width="0.35" letter-spacing="0">Leader</text><g transform="translate(348.3 1231.4)"><circle r="6" fill="#f4f4f4"/><rect x="-1.75" y="-9.4" width="3.5" height="4.9" rx="0.5" fill="#f4f4f4" transform="rotate(0)"/><rect x="-1.75" y="-9.4" width="3.5" height="4.9" rx="0.5" fill="#f4f4f4" transform="rotate(45)"/><rect x="-1.75" y="-9.4" width="3.5" height="4.9" rx="0.5" fill="#f4f4f4" transform="rotate(90)"/><rect x="-1.75" y="-9.4" width="3.5" height="4.9" rx="0.5" fill="#f4f4f4" transform="rotate(135)"/><rect x="-1.75" y="-9.4" width="3.5" height="4.9" rx="0.5" fill="#f4f4f4" transform="rotate(180)"/><rect x="-1.75" y="-9.4" width="3.5" height="4.9" rx="0.5" fill="#f4f4f4" transform="rotate(225)"/><rect x="-1.75" y="-9.4" width="3.5" height="4.9" rx="0.5" fill="#f4f4f4" transform="rotate(270)"/><rect x="-1.75" y="-9.4" width="3.5" height="4.9" rx="0.5" fill="#f4f4f4" transform="rotate(315)"/><circle r="2" fill="#3d4352"/></g>
<circle cx="69.2" cy="1279" r="14.4" fill="none" stroke="#dcdcdc" stroke-width="2"/><path d="M54.8 1279 H45 L25.9 1313.76" stroke="#dcdcdc" stroke-width="2" fill="none" /><path d="M20.6 1323.4 L21.08 1308.83 L32.65 1315.19 Z" fill="#dcdcdc"/>
<circle cx="157" cy="1279" r="14.4" fill="none" stroke="#dcdcdc" stroke-width="2"/><path d="M142.6 1279 H133 L114.06 1313.74" stroke="#dcdcdc" stroke-width="2" fill="none" /><path d="M108.8 1323.4 L109.23 1308.83 L120.82 1315.14 Z" fill="#dcdcdc"/>
<g transform="translate(171.8 1296.6) rotate(140.5)"><rect x="0" y="-3.6" width="16.47" height="7.2" fill="#efefef"/><rect x="16.47" y="-4.6" width="2.6" height="9.2" fill="#3d4352"/><path d="M19.07 -3.5 C30.51 -7.2 42.86 -5.6 45.75 1.6 C38.28 4.9 27.3 4.6 19.07 3.5 Z" fill="#d4b07a"/></g>
<path d="M198 1256 V1272 M190 1264 H206" stroke="#72d080" stroke-width="4.4" fill="none" />
<circle cx="217.4" cy="1271" r="3.9" fill="none" stroke="#dcdcdc" stroke-width="2"/><path d="M213.5 1271 H206.8" stroke="#dcdcdc" stroke-width="2" fill="none" /><path d="M206.8 1271 L200 1282.5" stroke="#dcdcdc" stroke-width="2" fill="none" stroke-linecap="butt"/><path d="M196.2 1287.3 L197.24 1279.4 L203.39 1283.87 Z" fill="#dcdcdc"/><path d="M206.8 1271 L212.4 1282.5" stroke="#dcdcdc" stroke-width="2" fill="none" stroke-linecap="butt"/><path d="M215.3 1287.3 L208.66 1282.9 L215.37 1279.34 Z" fill="#dcdcdc"/>
<circle cx="256.8" cy="1260.9" r="3.9" fill="none" stroke="#dcdcdc" stroke-width="2"/><path d="M252.9 1260.9 H245 L238.2 1269.3" stroke="#dcdcdc" stroke-width="2" fill="none" /><path d="M234.8 1273.5 L236.35 1265.23 L242.57 1270.27 Z" fill="#dcdcdc"/>
<circle cx="256.8" cy="1273" r="3.9" fill="none" stroke="#dcdcdc" stroke-width="2"/><path d="M252.9 1273 H248.5 L241.75 1282.85" stroke="#dcdcdc" stroke-width="2" fill="none" /><path d="M238.7 1287.3 L239.58 1278.93 L246.18 1283.46 Z" fill="#dcdcdc"/>
<path d="M265 1256.2 L265 1287.6" stroke="#7fc0f7" stroke-width="2" fill="none" stroke-linecap="butt"/>
<circle cx="303.2" cy="1264.7" r="6" fill="none" stroke="#dcdcdc" stroke-width="2"/><path d="M297.2 1264.7 H290.4 L281.15 1281.1" stroke="#dcdcdc" stroke-width="2" fill="none" /><path d="M278.5 1285.8 L278.65 1277.39 L285.62 1281.32 Z" fill="#dcdcdc"/>
<path d="M304.3 1272.8 L294.4 1282.1 L301 1281.7 L298.2 1288.1 L309.7 1279.3 L303 1279.3 Z" fill="#f5cc78"/>
<path d="M192 1302 L202 1312 M202 1302 L192 1312" stroke="#e86a6a" stroke-width="4.4" fill="none" />
<circle cx="217.4" cy="1315" r="3.9" fill="none" stroke="#dcdcdc" stroke-width="2"/><path d="M213.5 1315 H206.8" stroke="#dcdcdc" stroke-width="2" fill="none" /><path d="M206.8 1315 L200 1326.5" stroke="#dcdcdc" stroke-width="2" fill="none" stroke-linecap="butt"/><path d="M196.2 1331.3 L197.24 1323.4 L203.39 1327.87 Z" fill="#dcdcdc"/><path d="M206.8 1315 L212.4 1326.5" stroke="#dcdcdc" stroke-width="2" fill="none" stroke-linecap="butt"/><path d="M215.3 1331.3 L208.66 1326.9 L215.37 1323.34 Z" fill="#dcdcdc"/>
<circle cx="258.9" cy="1323.4" r="6" fill="none" stroke="#dcdcdc" stroke-width="2"/>
<circle cx="258.9" cy="1308.3" r="6" fill="none" stroke="#dcdcdc" stroke-width="2"/><path d="M252.9 1308.3 H247.2 L237.33 1325.14" stroke="#dcdcdc" stroke-width="2" fill="none" /><path d="M234.6 1329.8 L234.89 1321.39 L241.79 1325.44 Z" fill="#dcdcdc"/>
<rect x="8" y="1350" width="352" height="2" fill="#252b37"/>
<path d="M8.6 1372 H25.8 L17.2 1381 Z" fill="#f2f2f2"/><text x="34.3" y="1381" font-size="19.5" fill="#f2f2f2" stroke="#f2f2f2" stroke-width="0.35" letter-spacing="-0.06">Table</text><g transform="translate(348.3 1375.4)"><circle r="6" fill="#f4f4f4"/><rect x="-1.75" y="-9.4" width="3.5" height="4.9" rx="0.5" fill="#f4f4f4" transform="rotate(0)"/><rect x="-1.75" y="-9.4" width="3.5" height="4.9" rx="0.5" fill="#f4f4f4" transform="rotate(45)"/><rect x="-1.75" y="-9.4" width="3.5" height="4.9" rx="0.5" fill="#f4f4f4" transform="rotate(90)"/><rect x="-1.75" y="-9.4" width="3.5" height="4.9" rx="0.5" fill="#f4f4f4" transform="rotate(135)"/><rect x="-1.75" y="-9.4" width="3.5" height="4.9" rx="0.5" fill="#f4f4f4" transform="rotate(180)"/><rect x="-1.75" y="-9.4" width="3.5" height="4.9" rx="0.5" fill="#f4f4f4" transform="rotate(225)"/><rect x="-1.75" y="-9.4" width="3.5" height="4.9" rx="0.5" fill="#f4f4f4" transform="rotate(270)"/><rect x="-1.75" y="-9.4" width="3.5" height="4.9" rx="0.5" fill="#f4f4f4" transform="rotate(315)"/><circle r="2" fill="#3d4352"/></g>
<rect x="22.8" y="1412.9" width="58.6" height="50.4" fill="none" stroke="#dcdcdc" stroke-width="2" />
<path d="M22.8 1427.9 H81.4 M22.8 1440.2 H81.4 M22.8 1452.3 H81.4 M42 1427.9 V1463.3 M62.2 1427.9 V1463.3" stroke="#dcdcdc" stroke-width="2" fill="none" />
<circle cx="86" cy="1404" r="9.9" fill="#fff5ee"/><circle cx="86" cy="1404" r="8.5" fill="#e8783e"/>
<rect x="109.8" y="1407.7" width="52.4" height="50.6" fill="none" stroke="#dcdcdc" stroke-width="2" />
<path d="M109.8 1422.7 H162.2 M109.8 1434.9 H162.2 M109.8 1447.1 H162.2 M127.5 1422.7 V1458.3 M145 1422.7 V1458.3" stroke="#dcdcdc" stroke-width="2" fill="none" />
<circle cx="174.1" cy="1404" r="9.9" fill="#fff5ee"/><circle cx="174.1" cy="1404" r="8.5" fill="#e8783e"/>
<g><path d="M171.8 1441 L136.5 1469.7" stroke="#3d4352" stroke-width="13" fill="none" /><g transform="translate(171.8 1441) rotate(140.89)"><rect x="0" y="-3.6" width="16.38" height="7.2" fill="#efefef"/><rect x="16.38" y="-4.6" width="2.6" height="9.2" fill="#3d4352"/><path d="M18.98 -3.5 C30.35 -7.2 42.64 -5.6 45.49 1.6 C38.09 4.9 27.17 4.6 18.98 3.5 Z" fill="#d4b07a"/></g></g>
<path d="M190.5 1404 H210.9 V1414.6 H221.5 V1427.4 H190.5 Z" fill="#dcdcdc" /><path d="M212.9 1404 L221.5 1412.6 H212.9 Z" fill="#f0f0f0" />
<path d="M200 1409 V1418 M204.5 1409 V1418 M209 1409 V1418 M200 1409 H209 M200 1413.5 H209 M200 1418 H209 " stroke="#a8a8a8" stroke-width="1.6" fill="none" />
<ellipse cx="194.1" cy="1405.3" rx="2.8" ry="3.7" fill="none" stroke="#3d4352" stroke-width="5.4"/><ellipse cx="194.1" cy="1413.7" rx="2.8" ry="3.7" fill="none" stroke="#3d4352" stroke-width="5.4"/><ellipse cx="194.1" cy="1405.3" rx="2.8" ry="3.7" fill="none" stroke="#f8c48c" stroke-width="2.2"/><ellipse cx="194.1" cy="1413.7" rx="2.8" ry="3.7" fill="none" stroke="#f8c48c" stroke-width="2.2"/>
<rect x="202" y="1414" width="22" height="20" fill="#3d4352" /><rect x="204" y="1416" width="18" height="16" fill="#efefef" /><rect x="204" y="1416" width="18" height="3.8" fill="#9c9c9c" /><rect x="207.4" y="1423" width="2" height="2" fill="#4a4f5a" /><rect x="211" y="1423" width="7.5" height="2" fill="#4a4f5a" /><rect x="207.4" y="1427" width="2" height="2" fill="#4a4f5a" /><rect x="211" y="1427" width="7.5" height="2" fill="#4a4f5a" />
<path d="M234 1401.8 H255.3 V1412.4 H265.9 V1425.8 H234 Z" fill="#dcdcdc" /><path d="M257.3 1401.8 L265.9 1410.4 H257.3 Z" fill="#f0f0f0" />
<path d="M245 1408 V1420 M248.67 1408 V1420 M252.33 1408 V1420 M256 1408 V1420 M245 1408 H256 M245 1412 H256 M245 1416 H256 M245 1420 H256 " stroke="#a8a8a8" stroke-width="1.6" fill="none" />
<ellipse cx="237.7" cy="1405.3" rx="2.8" ry="3.7" fill="none" stroke="#3d4352" stroke-width="5.4"/><ellipse cx="237.7" cy="1413.7" rx="2.8" ry="3.7" fill="none" stroke="#3d4352" stroke-width="5.4"/><ellipse cx="237.7" cy="1405.3" rx="2.8" ry="3.7" fill="none" stroke="#f8c48c" stroke-width="2.2"/><ellipse cx="237.7" cy="1413.7" rx="2.8" ry="3.7" fill="none" stroke="#f8c48c" stroke-width="2.2"/>
<path d="M254.6 1411.6 H265.4 V1421.6 H269 L260 1433.8 L251 1421.6 H254.6 Z" fill="#3d4352" />
<path d="M256.6 1413.6 H263.4 V1422.6 H266.2 L260 1431.3 L253.8 1422.6 H256.6 Z" fill="#6fb6f2" />
<rect x="198.4" y="1458.2" width="23.8" height="7.5" fill="#99c9f5" /><rect x="198.4" y="1468.3" width="23.8" height="7.7" fill="#dcdcdc" /><rect x="188.5" y="1442.7" width="20.9" height="20.4" fill="#3d4352" /><rect x="190" y="1444.2" width="17.9" height="17.4" fill="#efefef" /><rect x="194" y="1448.2" width="2" height="2" fill="#2a7de1" /><rect x="197.4" y="1448.2" width="6.6" height="2" fill="#2a7de1" /><rect x="194" y="1452.2" width="2" height="2" fill="#2a7de1" /><rect x="197.4" y="1452.2" width="6.6" height="2" fill="#2a7de1" /><rect x="194" y="1456.2" width="2" height="2" fill="#2a7de1" /><rect x="197.4" y="1456.2" width="6.6" height="2" fill="#2a7de1" /><text x="209.4" y="1455.5" font-size="15.2" fill="#7fc0f7" font-weight="bold" >A</text>
<path d="M234 1466 H243 V1452.3 H252 V1466 H265.9 V1476 H234 Z" fill="#dcdcdc" />
<path d="M240 1456 V1471 M243.75 1456 V1471 M247.5 1456 V1471 M251.25 1456 V1471 M255 1456 V1471 M240 1456 H255 M240 1459.75 H255 M240 1463.5 H255 M240 1467.25 H255 M240 1471 H255 " stroke="#9a9a9a" stroke-width="1.6" fill="none" />
<rect x="234" y="1470.6" width="31.9" height="5.4" fill="#dcdcdc" />
<ellipse cx="237.7" cy="1449.3" rx="2.8" ry="3.7" fill="none" stroke="#3d4352" stroke-width="5.4"/><ellipse cx="237.7" cy="1457.7" rx="2.8" ry="3.7" fill="none" stroke="#3d4352" stroke-width="5.4"/><ellipse cx="237.7" cy="1449.3" rx="2.8" ry="3.7" fill="none" stroke="#f8c48c" stroke-width="2.2"/><ellipse cx="237.7" cy="1457.7" rx="2.8" ry="3.7" fill="none" stroke="#f8c48c" stroke-width="2.2"/>
<circle cx="258" cy="1451" r="9.8" fill="#3d4352"/>
<path d="M252.55 1449.02 A5.8 5.8 0 0 1 262.44 1447.27" fill="none" stroke="#72d080" stroke-width="2.6"/><path d="M264.11 1449.26 L258.76 1446.45 L264.77 1443.25 Z" fill="#72d080"/><path d="M263.45 1452.98 A5.8 5.8 0 0 1 253.56 1454.73" fill="none" stroke="#72d080" stroke-width="2.6"/><path d="M251.89 1452.74 L257.24 1455.55 L251.23 1458.75 Z" fill="#72d080"/>
<rect x="8" y="1494" width="352" height="2" fill="#252b37"/>
<path d="M8.6 1516 H25.8 L17.2 1525 Z" fill="#f2f2f2"/><text x="34.3" y="1525" font-size="19.5" fill="#f2f2f2" stroke="#f2f2f2" stroke-width="0.35" letter-spacing="0.16">Parametric</text><g transform="translate(348.3 1519.4)"><circle r="6" fill="#f4f4f4"/><rect x="-1.75" y="-9.4" width="3.5" height="4.9" rx="0.5" fill="#f4f4f4" transform="rotate(0)"/><rect x="-1.75" y="-9.4" width="3.5" height="4.9" rx="0.5" fill="#f4f4f4" transform="rotate(45)"/><rect x="-1.75" y="-9.4" width="3.5" height="4.9" rx="0.5" fill="#f4f4f4" transform="rotate(90)"/><rect x="-1.75" y="-9.4" width="3.5" height="4.9" rx="0.5" fill="#f4f4f4" transform="rotate(135)"/><rect x="-1.75" y="-9.4" width="3.5" height="4.9" rx="0.5" fill="#f4f4f4" transform="rotate(180)"/><rect x="-1.75" y="-9.4" width="3.5" height="4.9" rx="0.5" fill="#f4f4f4" transform="rotate(225)"/><rect x="-1.75" y="-9.4" width="3.5" height="4.9" rx="0.5" fill="#f4f4f4" transform="rotate(270)"/><rect x="-1.75" y="-9.4" width="3.5" height="4.9" rx="0.5" fill="#f4f4f4" transform="rotate(315)"/><circle r="2" fill="#3d4352"/></g>
<path d="M23 1550 L23 1608" stroke="#e07474" stroke-width="2.2" fill="none" stroke-linecap="butt"/>
<rect x="20" y="1608.4" width="6.2" height="6.2" fill="#e07474" />
<path d="M28.3 1611.4 L84 1611.4" stroke="#dcdcdc" stroke-width="2" fill="none" stroke-linecap="butt"/>
<path d="M94 1623.8 H86.4 L94 1616.2 Z" fill="#8d8d8d"/>
<rect x="115.8" y="1544.2" width="12.5" height="9.6" fill="#99c9f5" />
<path d="M115 1544.2 L115 1567.8" stroke="#e07474" stroke-width="2.2" fill="none" stroke-linecap="butt"/>
<rect x="102" y="1558.2" width="12" height="9.6" fill="#dcdcdc" />
<path d="M127.9 1560.4 L118 1569.7 L124.6 1569.3 L121.8 1575.7 L133.3 1566.9 L126.6 1566.9 Z" fill="#f5cc78"/>
<path d="M151.5 1544.5 H146.5 V1571.7 H151.5" stroke="#ffffff" stroke-width="2" fill="none" /><path d="M168 1544.5 H173 V1558" stroke="#ffffff" stroke-width="2" fill="none" /><path d="M158.3 1560 L168 1550.7" stroke="#c4c4c4" stroke-width="2" fill="none" stroke-linecap="butt"/><path d="M153 1555 L163.2 1565.2" stroke="#e07474" stroke-width="2.2" fill="none" stroke-linecap="butt"/>
<circle cx="171.8" cy="1565.2" r="6.3" fill="#f8d47c"/><path d="M168.8 1571.8 H174.8 V1573.7 A3 3 0 0 1 168.8 1573.7 Z" fill="#f4f4f4"/>
<path d="M197 1550 V1613.8 M258.9 1550 V1613.8" stroke="#dcdcdc" stroke-width="2" fill="none" />
<path d="M205.8 1563.2 L250.2 1563.2" stroke="#dcdcdc" stroke-width="2.2" fill="none" stroke-linecap="butt"/><path d="M198.8 1563.2 L206.8 1558.2 L206.8 1568.2 Z" fill="#dcdcdc"/><path d="M257.2 1563.2 L249.2 1568.2 L249.2 1558.2 Z" fill="#dcdcdc"/>
<path d="M221 1591 V1584.6 A7 7 0 0 1 235 1584.6 V1591" stroke="#f8d47c" stroke-width="4.2" fill="none" />
<rect x="215" y="1590" width="26" height="19.8" fill="#f8d47c" />
<rect x="227.1" y="1596.3" width="1.9" height="7.3" fill="#3d4352" />
<path d="M270.2 1623.8 H262.6 L270.2 1616.2 Z" fill="#8d8d8d"/>
<path d="M279 1544.2 V1576 M309 1544.2 V1576" stroke="#dcdcdc" stroke-width="2" fill="none" />
<path d="M285.4 1550.7 L302.6 1550.7" stroke="#dcdcdc" stroke-width="2" fill="none" stroke-linecap="butt"/><path d="M281 1550.7 L286.4 1547.3 L286.4 1554.1 Z" fill="#dcdcdc"/><path d="M307 1550.7 L301.6 1554.1 L301.6 1547.3 Z" fill="#dcdcdc"/>
<g transform="rotate(-90 293.8 1565.7)"><path d="M288.54 1563.78 A5.6 5.6 0 0 1 298.09 1562.1" fill="none" stroke="#6fb6f2" stroke-width="2.4"/><path d="M299.76 1564.09 L294.41 1561.27 L300.42 1558.08 Z" fill="#6fb6f2"/><path d="M299.06 1567.62 A5.6 5.6 0 0 1 289.51 1569.3" fill="none" stroke="#ea6a6a" stroke-width="2.4"/><path d="M287.84 1567.31 L293.19 1570.13 L287.18 1573.32 Z" fill="#ea6a6a"/></g>
<path d="M323 1544.2 V1576 M349 1544.2 V1558" stroke="#dcdcdc" stroke-width="2" fill="none" />
<path d="M329.4 1550.7 L342.6 1550.7" stroke="#dcdcdc" stroke-width="2" fill="none" stroke-linecap="butt"/><path d="M325 1550.7 L330.4 1547.3 L330.4 1554.1 Z" fill="#dcdcdc"/><path d="M347 1550.7 L341.6 1554.1 L341.6 1547.3 Z" fill="#dcdcdc"/>
<circle cx="348" cy="1565.2" r="6.3" fill="#f8d47c"/><path d="M345 1571.8 H351 V1573.7 A3 3 0 0 1 345 1573.7 Z" fill="#f4f4f4"/>
<path d="M107.5 1588.5 H102.5 V1615.7 H107.5" stroke="#ffffff" stroke-width="2" fill="none" /><path d="M124 1588.5 H129 V1602" stroke="#ffffff" stroke-width="2" fill="none" /><path d="M114.3 1604 L124 1594.7" stroke="#c4c4c4" stroke-width="2" fill="none" stroke-linecap="butt"/><path d="M109 1599 L119.2 1609.2" stroke="#e07474" stroke-width="2.2" fill="none" stroke-linecap="butt"/>
<path d="M127.5 1602.9 A6.3 6.3 0 0 0 127.5 1615.5 Z" fill="#f8d47c"/><path d="M127.5 1602.9 A6.3 6.3 0 0 1 127.5 1615.5 Z" fill="#86dbe4"/><path d="M124.5 1615.8 H130.5 V1617.7 A3 3 0 0 1 124.5 1617.7 Z" fill="#f4f4f4"/>
<path d="M151.5 1588.5 H146.5 V1615.7 H151.5" stroke="#ffffff" stroke-width="2" fill="none" /><path d="M168 1588.5 H173 V1602" stroke="#ffffff" stroke-width="2" fill="none" /><path d="M158.3 1604 L168 1594.7" stroke="#c4c4c4" stroke-width="2" fill="none" stroke-linecap="butt"/><path d="M153 1599 L163.2 1609.2" stroke="#e07474" stroke-width="2.2" fill="none" stroke-linecap="butt"/>
<circle cx="171.8" cy="1609.2" r="6.3" fill="#86dbe4"/><path d="M168.8 1615.8 H174.8 V1617.7 A3 3 0 0 1 168.8 1617.7 Z" fill="#f4f4f4"/>
<path d="M279 1588.2 V1620 M305.5 1588.2 V1602" stroke="#dcdcdc" stroke-width="2" fill="none" />
<path d="M285.4 1594.7 L299.1 1594.7" stroke="#dcdcdc" stroke-width="2" fill="none" stroke-linecap="butt"/><path d="M281 1594.7 L286.4 1591.3 L286.4 1598.1 Z" fill="#dcdcdc"/><path d="M303.5 1594.7 L298.1 1598.1 L298.1 1591.3 Z" fill="#dcdcdc"/>
<path d="M303.5 1602.9 A6.3 6.3 0 0 0 303.5 1615.5 Z" fill="#f8d47c"/><path d="M303.5 1602.9 A6.3 6.3 0 0 1 303.5 1615.5 Z" fill="#86dbe4"/><path d="M300.5 1615.8 H306.5 V1617.7 A3 3 0 0 1 300.5 1617.7 Z" fill="#f4f4f4"/>
<path d="M323 1588.2 V1620 M349 1588.2 V1602" stroke="#dcdcdc" stroke-width="2" fill="none" />
<path d="M329.4 1594.7 L342.6 1594.7" stroke="#dcdcdc" stroke-width="2" fill="none" stroke-linecap="butt"/><path d="M325 1594.7 L330.4 1591.3 L330.4 1598.1 Z" fill="#dcdcdc"/><path d="M347 1594.7 L341.6 1598.1 L341.6 1591.3 Z" fill="#dcdcdc"/>
<circle cx="348" cy="1609.2" r="6.3" fill="#86dbe4"/><path d="M345 1615.8 H351 V1617.7 A3 3 0 0 1 345 1617.7 Z" fill="#f4f4f4"/>
<rect x="8" y="1638" width="352" height="2" fill="#252b37"/>
<path d="M31 1941.5 H53 M42 1930.5 V1952.5" stroke="#e6e6e6" stroke-width="2" fill="none" />
<path d="M91 1932.6 H113 M88 1937.6 H113 M91 1942.6 H103" stroke="#e6e6e6" stroke-width="2" fill="none" />
<rect x="88" y="1946" width="25" height="4.2" fill="#e6e6e6" />
<path d="M107 1944.6 L110 1940.4 L113 1944.6 Z" fill="#e6e6e6" />
</svg>
</body></html>
